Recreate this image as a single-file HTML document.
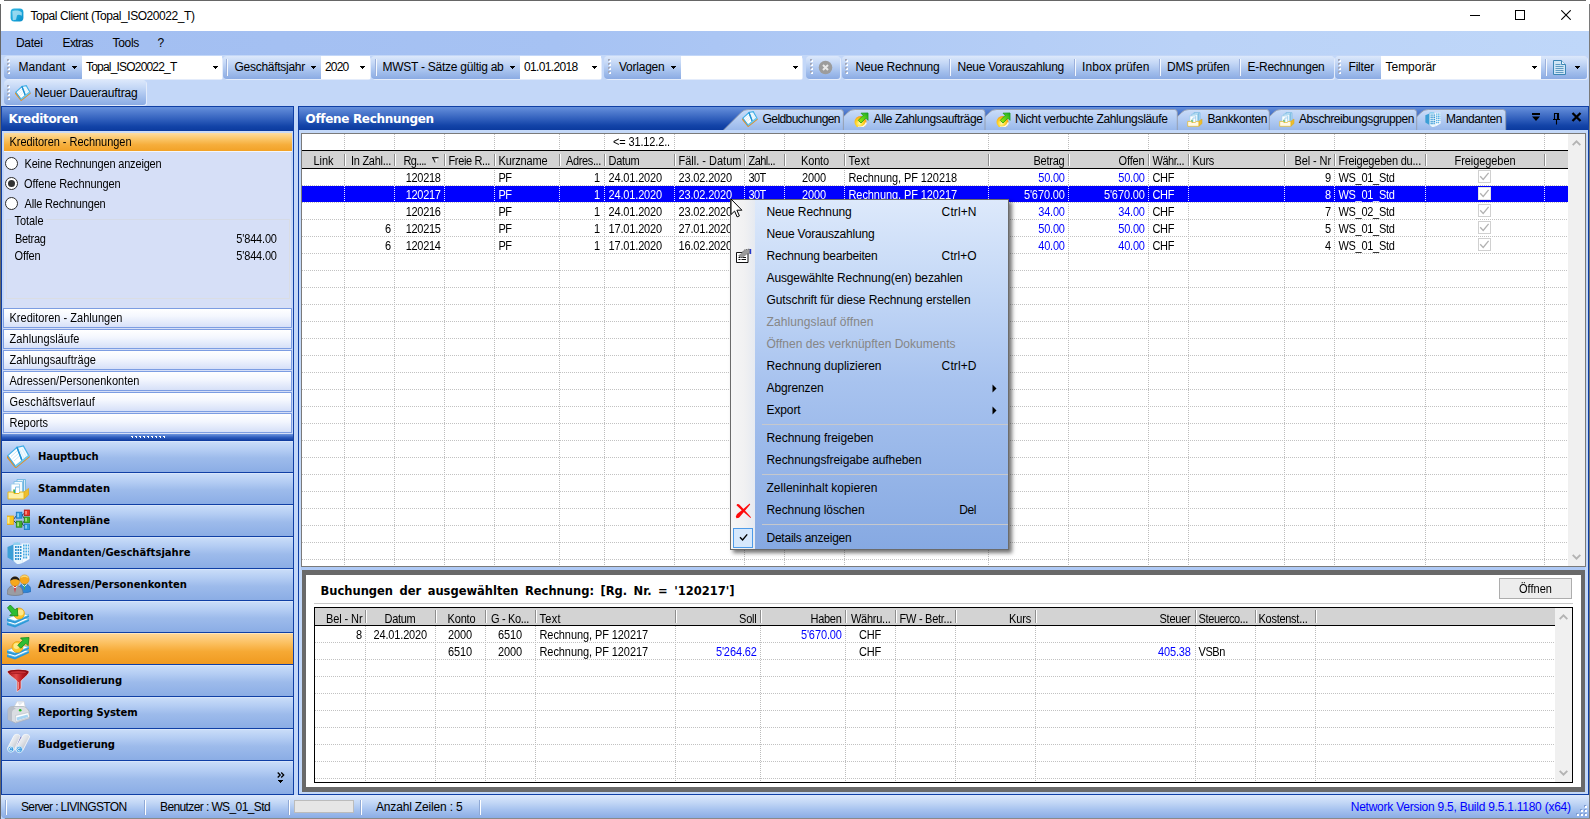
<!DOCTYPE html>
<html lang="de"><head><meta charset="utf-8"><title>Topal Client (Topal_ISO20022_T)</title>
<style>
html,body{margin:0;padding:0;}
body{width:1590px;height:819px;overflow:hidden;position:relative;background:#C3D7F8;font-family:"Liberation Sans",sans-serif;font-size:12px;}
div,span,i,b,svg{position:absolute;display:block;box-sizing:border-box;}
span{white-space:pre;}
</style></head><body>
<div style="left:0px;top:0px;width:1590px;height:819px;background:#C3D7F8"></div>
<div style="left:0px;top:0px;width:1590px;height:31px;background:#fff"></div>
<div style="left:4px;top:0px;width:1582px;height:1px;background:#666"></div>
<div style="left:0px;top:4px;width:1px;height:815px;background:#666"></div>
<div style="left:1589px;top:4px;width:1px;height:815px;background:#7A7A7A"></div>
<svg style="left:10px;top:7.500px" width="14" height="14" viewBox="0 0 14 14"><defs><linearGradient id="ti" x1="0" y1="0" x2="1" y2="1"><stop offset="0" stop-color="#35B6E2"/><stop offset=".6" stop-color="#16A2D8"/><stop offset="1" stop-color="#0B8CC6"/></linearGradient><filter id="tb" x="-20%" y="-20%" width="140%" height="140%"><feGaussianBlur stdDeviation=".55"/></filter></defs><rect x=".6" y=".6" width="12.800" height="12.800" rx="3.600" fill="url(#ti)"/><path d="M2.300 3.300c1-1.200 8-1.600 9.500 1.200v3.300c-2.500-1.500-4.300-1-4.800-.3l-1 4.300-3.200 .5z" fill="#D2F1FB" opacity=".65" filter="url(#tb)"/></svg>
<span style='left:30.50px;top:7.50px;line-height:16px;font-family:"Liberation Sans", sans-serif;font-size:12px;color:#000;letter-spacing:-0.433px;'>Topal Client (Topal_ISO20022_T)</span>
<div style="left:1470px;top:15px;width:10px;height:1px;background:#000"></div>
<div style="left:1515px;top:10px;width:10px;height:10px;border:1px solid #000;box-sizing:border-box"></div>
<svg style="left:1561px;top:10px" width="10" height="10" viewBox="0 0 10 10"><path d="M.3 .3L9.700 9.700M9.700 .3L.3 9.700" stroke="#000" stroke-width="1.100" fill="none"/></svg>
<div style="left:1px;top:31px;width:1588px;height:24px;background:linear-gradient(to right,#A2BEF1 0%,#A6C2F3 35%,#BAD2F7 75%,#BFD7F9 100%)"></div>
<span style='left:16.00px;top:34.50px;line-height:16px;font-family:"Liberation Sans", sans-serif;font-size:12px;color:#000;letter-spacing:-0.303px;'>Datei</span>
<span style='left:62.50px;top:34.50px;line-height:16px;font-family:"Liberation Sans", sans-serif;font-size:12px;color:#000;letter-spacing:-0.586px;'>Extras</span>
<span style='left:112.50px;top:34.50px;line-height:16px;font-family:"Liberation Sans", sans-serif;font-size:12px;color:#000;letter-spacing:-0.303px;'>Tools</span>
<span style='left:157.50px;top:34.50px;line-height:16px;font-family:"Liberation Sans", sans-serif;font-size:12px;color:#000;'>?</span>
<div style="left:4px;top:56px;width:218px;height:23px;background:linear-gradient(to bottom,#DCE8FB 0%,#C5D8F6 30%,#A2BEEC 70%,#8BABE3 100%);border-radius:4px 3px 3px 4px;box-shadow:1px 1px 0 #E4ECFB"></div>
<div style="left:7px;top:59px;width:4px;height:18px"><b style="left:0;top:0px;width:2px;height:2px;background:#A5A8B8"></b><b style="left:1px;top:1px;width:2px;height:2px;background:#fff"></b><b style="left:1px;top:1px;width:1px;height:1px;background:#B9CDED"></b><b style="left:0;top:4px;width:2px;height:2px;background:#A5A8B8"></b><b style="left:1px;top:5px;width:2px;height:2px;background:#fff"></b><b style="left:1px;top:5px;width:1px;height:1px;background:#B9CDED"></b><b style="left:0;top:8px;width:2px;height:2px;background:#A5A8B8"></b><b style="left:1px;top:9px;width:2px;height:2px;background:#fff"></b><b style="left:1px;top:9px;width:1px;height:1px;background:#B9CDED"></b><b style="left:0;top:12px;width:2px;height:2px;background:#A5A8B8"></b><b style="left:1px;top:13px;width:2px;height:2px;background:#fff"></b><b style="left:1px;top:13px;width:1px;height:1px;background:#B9CDED"></b></div>
<span style='left:18.50px;top:58.50px;line-height:16px;font-family:"Liberation Sans", sans-serif;font-size:12px;color:#000;letter-spacing:0.042px;'>Mandant</span>
<i style="left:72px;top:66px;width:5px;height:3px"><b style="left:0px;top:0px;width:5px;height:1px;background:#000"></b><b style="left:1px;top:1px;width:3px;height:1px;background:#000"></b><b style="left:2px;top:2px;width:1px;height:1px;background:#000"></b></i>
<div style="left:82px;top:56px;width:140px;height:23px;background:#fff"></div>
<i style="left:213px;top:66px;width:5px;height:3px"><b style="left:0px;top:0px;width:5px;height:1px;background:#000"></b><b style="left:1px;top:1px;width:3px;height:1px;background:#000"></b><b style="left:2px;top:2px;width:1px;height:1px;background:#000"></b></i>
<span style='left:86.00px;top:59.00px;line-height:16px;font-family:"Liberation Sans", sans-serif;font-size:12px;color:#000;letter-spacing:-0.807px;'>Topal_ISO20022_T</span>
<div style="left:223px;top:56px;width:147px;height:23px;background:linear-gradient(to bottom,#DCE8FB 0%,#C5D8F6 30%,#A2BEEC 70%,#8BABE3 100%);border-radius:4px 3px 3px 4px;box-shadow:1px 1px 0 #E4ECFB"></div>
<div style="left:226px;top:59px;width:1px;height:17px;background:#9BB0DC"></div>
<div style="left:227px;top:59px;width:1px;height:17px;background:#F4F8FE"></div>
<span style='left:234.50px;top:58.50px;line-height:16px;font-family:"Liberation Sans", sans-serif;font-size:12px;color:#000;letter-spacing:-0.273px;'>Geschäftsjahr</span>
<i style="left:311px;top:66px;width:5px;height:3px"><b style="left:0px;top:0px;width:5px;height:1px;background:#000"></b><b style="left:1px;top:1px;width:3px;height:1px;background:#000"></b><b style="left:2px;top:2px;width:1px;height:1px;background:#000"></b></i>
<div style="left:321px;top:56px;width:48.5px;height:23px;background:#fff"></div>
<i style="left:360px;top:66px;width:5px;height:3px"><b style="left:0px;top:0px;width:5px;height:1px;background:#000"></b><b style="left:1px;top:1px;width:3px;height:1px;background:#000"></b><b style="left:2px;top:2px;width:1px;height:1px;background:#000"></b></i>
<span style='left:325.00px;top:59.00px;line-height:16px;font-family:"Liberation Sans", sans-serif;font-size:12px;color:#000;letter-spacing:-0.801px;'>2020</span>
<div style="left:371px;top:56px;width:230px;height:23px;background:linear-gradient(to bottom,#DCE8FB 0%,#C5D8F6 30%,#A2BEEC 70%,#8BABE3 100%);border-radius:4px 3px 3px 4px;box-shadow:1px 1px 0 #E4ECFB"></div>
<div style="left:375px;top:59px;width:1px;height:17px;background:#9BB0DC"></div>
<div style="left:376px;top:59px;width:1px;height:17px;background:#F4F8FE"></div>
<span style='left:382.50px;top:58.50px;line-height:16px;font-family:"Liberation Sans", sans-serif;font-size:12px;color:#000;letter-spacing:-0.250px;'>MWST - Sätze gültig ab</span>
<i style="left:510px;top:66px;width:5px;height:3px"><b style="left:0px;top:0px;width:5px;height:1px;background:#000"></b><b style="left:1px;top:1px;width:3px;height:1px;background:#000"></b><b style="left:2px;top:2px;width:1px;height:1px;background:#000"></b></i>
<div style="left:520px;top:56px;width:81px;height:23px;background:#fff"></div>
<i style="left:592px;top:66px;width:5px;height:3px"><b style="left:0px;top:0px;width:5px;height:1px;background:#000"></b><b style="left:1px;top:1px;width:3px;height:1px;background:#000"></b><b style="left:2px;top:2px;width:1px;height:1px;background:#000"></b></i>
<span style='left:524.00px;top:59.00px;line-height:16px;font-family:"Liberation Sans", sans-serif;font-size:12px;color:#000;letter-spacing:-0.656px;'>01.01.2018</span>
<div style="left:604px;top:56px;width:198px;height:23px;background:linear-gradient(to bottom,#DCE8FB 0%,#C5D8F6 30%,#A2BEEC 70%,#8BABE3 100%);border-radius:4px 3px 3px 4px;box-shadow:1px 1px 0 #E4ECFB"></div>
<div style="left:608px;top:59px;width:4px;height:18px"><b style="left:0;top:0px;width:2px;height:2px;background:#A5A8B8"></b><b style="left:1px;top:1px;width:2px;height:2px;background:#fff"></b><b style="left:1px;top:1px;width:1px;height:1px;background:#B9CDED"></b><b style="left:0;top:4px;width:2px;height:2px;background:#A5A8B8"></b><b style="left:1px;top:5px;width:2px;height:2px;background:#fff"></b><b style="left:1px;top:5px;width:1px;height:1px;background:#B9CDED"></b><b style="left:0;top:8px;width:2px;height:2px;background:#A5A8B8"></b><b style="left:1px;top:9px;width:2px;height:2px;background:#fff"></b><b style="left:1px;top:9px;width:1px;height:1px;background:#B9CDED"></b><b style="left:0;top:12px;width:2px;height:2px;background:#A5A8B8"></b><b style="left:1px;top:13px;width:2px;height:2px;background:#fff"></b><b style="left:1px;top:13px;width:1px;height:1px;background:#B9CDED"></b></div>
<span style='left:619.00px;top:58.50px;line-height:16px;font-family:"Liberation Sans", sans-serif;font-size:12px;color:#000;letter-spacing:-0.234px;'>Vorlagen</span>
<i style="left:671px;top:66px;width:5px;height:3px"><b style="left:0px;top:0px;width:5px;height:1px;background:#000"></b><b style="left:1px;top:1px;width:3px;height:1px;background:#000"></b><b style="left:2px;top:2px;width:1px;height:1px;background:#000"></b></i>
<div style="left:681px;top:56px;width:121px;height:23px;background:#fff"></div>
<i style="left:793px;top:66px;width:5px;height:3px"><b style="left:0px;top:0px;width:5px;height:1px;background:#000"></b><b style="left:1px;top:1px;width:3px;height:1px;background:#000"></b><b style="left:2px;top:2px;width:1px;height:1px;background:#000"></b></i>
<div style="left:806px;top:56px;width:34px;height:23px;background:linear-gradient(to bottom,#DCE8FB 0%,#C5D8F6 30%,#A2BEEC 70%,#8BABE3 100%);border-radius:4px 3px 3px 4px;box-shadow:1px 1px 0 #E4ECFB"></div>
<div style="left:810px;top:59px;width:4px;height:18px"><b style="left:0;top:0px;width:2px;height:2px;background:#A5A8B8"></b><b style="left:1px;top:1px;width:2px;height:2px;background:#fff"></b><b style="left:1px;top:1px;width:1px;height:1px;background:#B9CDED"></b><b style="left:0;top:4px;width:2px;height:2px;background:#A5A8B8"></b><b style="left:1px;top:5px;width:2px;height:2px;background:#fff"></b><b style="left:1px;top:5px;width:1px;height:1px;background:#B9CDED"></b><b style="left:0;top:8px;width:2px;height:2px;background:#A5A8B8"></b><b style="left:1px;top:9px;width:2px;height:2px;background:#fff"></b><b style="left:1px;top:9px;width:1px;height:1px;background:#B9CDED"></b><b style="left:0;top:12px;width:2px;height:2px;background:#A5A8B8"></b><b style="left:1px;top:13px;width:2px;height:2px;background:#fff"></b><b style="left:1px;top:13px;width:1px;height:1px;background:#B9CDED"></b></div>
<svg style="left:818px;top:60px" width="15" height="15" viewBox="0 0 15 15"><circle cx="7.5" cy="7.5" r="6.8" fill="#9C9C9C"/><path d="M5 5l5 5M10 5l-5 5" stroke="#E8E8E8" stroke-width="2" fill="none"/></svg>
<div style="left:841.5px;top:56px;width:492px;height:23px;background:linear-gradient(to bottom,#DCE8FB 0%,#C5D8F6 30%,#A2BEEC 70%,#8BABE3 100%);border-radius:4px 3px 3px 4px;box-shadow:1px 1px 0 #E4ECFB"></div>
<div style="left:845px;top:59px;width:4px;height:18px"><b style="left:0;top:0px;width:2px;height:2px;background:#A5A8B8"></b><b style="left:1px;top:1px;width:2px;height:2px;background:#fff"></b><b style="left:1px;top:1px;width:1px;height:1px;background:#B9CDED"></b><b style="left:0;top:4px;width:2px;height:2px;background:#A5A8B8"></b><b style="left:1px;top:5px;width:2px;height:2px;background:#fff"></b><b style="left:1px;top:5px;width:1px;height:1px;background:#B9CDED"></b><b style="left:0;top:8px;width:2px;height:2px;background:#A5A8B8"></b><b style="left:1px;top:9px;width:2px;height:2px;background:#fff"></b><b style="left:1px;top:9px;width:1px;height:1px;background:#B9CDED"></b><b style="left:0;top:12px;width:2px;height:2px;background:#A5A8B8"></b><b style="left:1px;top:13px;width:2px;height:2px;background:#fff"></b><b style="left:1px;top:13px;width:1px;height:1px;background:#B9CDED"></b></div>
<span style='left:855.50px;top:58.50px;line-height:16px;font-family:"Liberation Sans", sans-serif;font-size:12px;color:#000;letter-spacing:-0.210px;'>Neue Rechnung</span>
<div style="left:949px;top:59px;width:1px;height:17px;background:#9BB0DC"></div>
<div style="left:950px;top:59px;width:1px;height:17px;background:#F4F8FE"></div>
<span style='left:957.50px;top:58.50px;line-height:16px;font-family:"Liberation Sans", sans-serif;font-size:12px;color:#000;letter-spacing:-0.273px;'>Neue Vorauszahlung</span>
<div style="left:1074px;top:59px;width:1px;height:17px;background:#9BB0DC"></div>
<div style="left:1075px;top:59px;width:1px;height:17px;background:#F4F8FE"></div>
<span style='left:1082.00px;top:58.50px;line-height:16px;font-family:"Liberation Sans", sans-serif;font-size:12px;color:#000;letter-spacing:0.065px;'>Inbox prüfen</span>
<div style="left:1159px;top:59px;width:1px;height:17px;background:#9BB0DC"></div>
<div style="left:1160px;top:59px;width:1px;height:17px;background:#F4F8FE"></div>
<span style='left:1167.00px;top:58.50px;line-height:16px;font-family:"Liberation Sans", sans-serif;font-size:12px;color:#000;letter-spacing:-0.153px;'>DMS prüfen</span>
<div style="left:1239px;top:59px;width:1px;height:17px;background:#9BB0DC"></div>
<div style="left:1240px;top:59px;width:1px;height:17px;background:#F4F8FE"></div>
<span style='left:1247.50px;top:58.50px;line-height:16px;font-family:"Liberation Sans", sans-serif;font-size:12px;color:#000;letter-spacing:-0.255px;'>E-Rechnungen</span>
<div style="left:1334.5px;top:56px;width:252px;height:23px;background:linear-gradient(to bottom,#DCE8FB 0%,#C5D8F6 30%,#A2BEEC 70%,#8BABE3 100%);border-radius:4px 3px 3px 4px;box-shadow:1px 1px 0 #E4ECFB"></div>
<div style="left:1338px;top:59px;width:4px;height:18px"><b style="left:0;top:0px;width:2px;height:2px;background:#A5A8B8"></b><b style="left:1px;top:1px;width:2px;height:2px;background:#fff"></b><b style="left:1px;top:1px;width:1px;height:1px;background:#B9CDED"></b><b style="left:0;top:4px;width:2px;height:2px;background:#A5A8B8"></b><b style="left:1px;top:5px;width:2px;height:2px;background:#fff"></b><b style="left:1px;top:5px;width:1px;height:1px;background:#B9CDED"></b><b style="left:0;top:8px;width:2px;height:2px;background:#A5A8B8"></b><b style="left:1px;top:9px;width:2px;height:2px;background:#fff"></b><b style="left:1px;top:9px;width:1px;height:1px;background:#B9CDED"></b><b style="left:0;top:12px;width:2px;height:2px;background:#A5A8B8"></b><b style="left:1px;top:13px;width:2px;height:2px;background:#fff"></b><b style="left:1px;top:13px;width:1px;height:1px;background:#B9CDED"></b></div>
<span style='left:1348.50px;top:58.50px;line-height:16px;font-family:"Liberation Sans", sans-serif;font-size:12px;color:#000;letter-spacing:-0.195px;'>Filter</span>
<div style="left:1381px;top:56px;width:160px;height:23px;background:#fff"></div>
<i style="left:1532px;top:66px;width:5px;height:3px"><b style="left:0px;top:0px;width:5px;height:1px;background:#000"></b><b style="left:1px;top:1px;width:3px;height:1px;background:#000"></b><b style="left:2px;top:2px;width:1px;height:1px;background:#000"></b></i>
<span style='left:1385.50px;top:59.00px;line-height:16px;font-family:"Liberation Sans", sans-serif;font-size:12px;color:#000;letter-spacing:-0.023px;'>Temporär</span>
<div style="left:1545px;top:59px;width:1px;height:17px;background:#9BB0DC"></div>
<div style="left:1546px;top:59px;width:1px;height:17px;background:#F4F8FE"></div>
<svg style="left:1552px;top:59px" width="15" height="17" viewBox="0 0 15 17"><path d="M1.5 1.5h8l4 4v10h-12z" fill="#CFE6F5" stroke="#3C86B5" stroke-width="1"/><path d="M9.5 1.5v4h4" fill="#EAF5FB" stroke="#3C86B5" stroke-width="1"/><path d="M3.5 5.5h5M3.5 7.5h8M3.5 9.5h8M3.5 11.5h8M3.5 13.5h8" stroke="#5F9BC2" stroke-width="1"/></svg>
<i style="left:1575px;top:66px;width:5px;height:3px"><b style="left:0px;top:0px;width:5px;height:1px;background:#000"></b><b style="left:1px;top:1px;width:3px;height:1px;background:#000"></b><b style="left:2px;top:2px;width:1px;height:1px;background:#000"></b></i>
<div style="left:4px;top:80px;width:142px;height:25px;background:linear-gradient(to bottom,#DCE8FB 0%,#C5D8F6 30%,#A2BEEC 70%,#8BABE3 100%);border-radius:4px 3px 3px 4px;box-shadow:1px 1px 0 #E4ECFB"></div>
<div style="left:7px;top:85px;width:4px;height:18px"><b style="left:0;top:0px;width:2px;height:2px;background:#A5A8B8"></b><b style="left:1px;top:1px;width:2px;height:2px;background:#fff"></b><b style="left:1px;top:1px;width:1px;height:1px;background:#B9CDED"></b><b style="left:0;top:4px;width:2px;height:2px;background:#A5A8B8"></b><b style="left:1px;top:5px;width:2px;height:2px;background:#fff"></b><b style="left:1px;top:5px;width:1px;height:1px;background:#B9CDED"></b><b style="left:0;top:8px;width:2px;height:2px;background:#A5A8B8"></b><b style="left:1px;top:9px;width:2px;height:2px;background:#fff"></b><b style="left:1px;top:9px;width:1px;height:1px;background:#B9CDED"></b><b style="left:0;top:12px;width:2px;height:2px;background:#A5A8B8"></b><b style="left:1px;top:13px;width:2px;height:2px;background:#fff"></b><b style="left:1px;top:13px;width:1px;height:1px;background:#B9CDED"></b></div>
<svg style="left:14.5px;top:84.5px" width="16" height="16" viewBox="0 0 23 24"><path d="M-.8 12.800L8.600 24.300 23.300 12.600 21.800 10 8.600 20 1 10z" fill="#E88F22"/><path d="M.8 10.600L10 2.300 15.200 16 8.600 21.300z" fill="#FFFFFF" stroke="#3FAEE6" stroke-width="1.700"/><path d="M10 2.300L16.400 .9 21.800 10.600 15.200 16z" fill="#F2FAFE" stroke="#3FAEE6" stroke-width="1.700"/><path d="M4 11.500l6.500-5.800M5.500 13.800l6.500-5.800M7 16l6.500-5.800" stroke="#CBE8F8" stroke-width="1"/><path d="M12.500 4.500l4.500 8.500M15 3.500l4.500 8.500" stroke="#D6EEFA" stroke-width="1"/><path d="M10 2.300L15.200 16" stroke="#2191D4" stroke-width="2"/><path d="M8.600 21.300L21.800 10.600" stroke="#6CC6EE" stroke-width="2.400"/></svg>
<span style='left:34.50px;top:84.50px;line-height:16px;font-family:"Liberation Sans", sans-serif;font-size:12px;color:#000;letter-spacing:-0.170px;'>Neuer Dauerauftrag</span>
<div style="left:1px;top:106px;width:293px;height:689px;background:#0F3FA5"></div>
<div style="left:2px;top:107px;width:291px;height:24px;background:linear-gradient(to bottom,#6690DC 0%,#4C78CC 25%,#2D5CBA 55%,#1344A8 80%,#0B3A9E 100%)"></div>
<span style='left:8.50px;top:111.00px;line-height:16px;font-family:"DejaVu Sans", "Liberation Sans", sans-serif;font-size:12px;color:#fff;font-weight:bold;letter-spacing:-0.314px;'>Kreditoren</span>
<div style="left:2px;top:131px;width:291px;height:303px;background:#D6DFF7;border-left:2px solid #C3D6F7;border-right:2px solid #C3D6F7"></div>
<div style="left:2px;top:131px;width:291px;height:2px;background:#C9DAF8"></div>
<div style="left:4px;top:133px;width:288px;height:18px;background:linear-gradient(to bottom,#FDDDA0 0%,#FAC465 35%,#F6AE3C 65%,#F2A227 100%)"></div>
<div style="left:4px;top:151px;width:288px;height:1px;background:#F3F6FD"></div>
<span style='left:9.50px;top:135.00px;line-height:15px;font-family:"Liberation Sans", sans-serif;font-size:11px;color:#000;letter-spacing:-0.040px;transform:scaleY(1.08);'>Kreditoren - Rechnungen</span>
<div style="left:5px;top:157px;width:13px;height:13px;border-radius:50%;background:#fff;border:1px solid #2B2B2B"></div>
<span style='left:24.50px;top:157.00px;line-height:15px;font-family:"Liberation Sans", sans-serif;font-size:11px;color:#000;letter-spacing:-0.171px;transform:scaleY(1.08);'>Keine Rechnungen anzeigen</span>
<div style="left:5px;top:177px;width:13px;height:13px;border-radius:50%;background:#fff;border:1px solid #2B2B2B"></div>
<div style="left:8px;top:180px;width:7px;height:7px;border-radius:50%;background:#333"></div>
<span style='left:24.00px;top:177.00px;line-height:15px;font-family:"Liberation Sans", sans-serif;font-size:11px;color:#000;letter-spacing:-0.104px;transform:scaleY(1.08);'>Offene Rechnungen</span>
<div style="left:5px;top:197px;width:13px;height:13px;border-radius:50%;background:#fff;border:1px solid #2B2B2B"></div>
<span style='left:24.50px;top:197.00px;line-height:15px;font-family:"Liberation Sans", sans-serif;font-size:11px;color:#000;letter-spacing:-0.186px;transform:scaleY(1.08);'>Alle Rechnungen</span>
<div style="left:6px;top:219px;width:284px;height:80px;border:1px solid #DADDE4;border-top-color:#D5DAE6"></div>
<div style="left:12px;top:214px;width:34px;height:14px;background:#D6DFF7"></div>
<span style='left:14.50px;top:213.50px;line-height:15px;font-family:"Liberation Sans", sans-serif;font-size:11px;color:#000;letter-spacing:-0.060px;transform:scaleY(1.08);'>Totale</span>
<span style='left:15.00px;top:231.50px;line-height:15px;font-family:"Liberation Sans", sans-serif;font-size:11px;color:#000;letter-spacing:-0.320px;transform:scaleY(1.08);'>Betrag</span>
<span style='left:14.50px;top:248.50px;line-height:15px;font-family:"Liberation Sans", sans-serif;font-size:11px;color:#000;letter-spacing:-0.144px;transform:scaleY(1.08);'>Offen</span>
<span style='left:236.33px;top:231.50px;line-height:15px;font-family:"Liberation Sans", sans-serif;font-size:11px;color:#000;letter-spacing:-0.172px;transform:scaleY(1.08);'>5'844.00</span>
<span style='left:236.33px;top:248.50px;line-height:15px;font-family:"Liberation Sans", sans-serif;font-size:11px;color:#000;letter-spacing:-0.172px;transform:scaleY(1.08);'>5'844.00</span>
<div style="left:3px;top:308px;width:289px;height:20px;background:linear-gradient(to bottom,#FFFFFF 0%,#F4F7FE 40%,#D6E0F8 100%);border:1px solid #7C9DE2"></div>
<span style='left:9.50px;top:311.00px;line-height:15px;font-family:"Liberation Sans", sans-serif;font-size:11px;color:#000;letter-spacing:0.022px;transform:scaleY(1.08);'>Kreditoren - Zahlungen</span>
<div style="left:3px;top:329px;width:289px;height:20px;background:linear-gradient(to bottom,#FFFFFF 0%,#F4F7FE 40%,#D6E0F8 100%);border:1px solid #7C9DE2"></div>
<span style='left:9.50px;top:332.00px;line-height:15px;font-family:"Liberation Sans", sans-serif;font-size:11px;color:#000;letter-spacing:0.069px;transform:scaleY(1.08);'>Zahlungsläufe</span>
<div style="left:3px;top:350px;width:289px;height:20px;background:linear-gradient(to bottom,#FFFFFF 0%,#F4F7FE 40%,#D6E0F8 100%);border:1px solid #7C9DE2"></div>
<span style='left:9.50px;top:353.00px;line-height:15px;font-family:"Liberation Sans", sans-serif;font-size:11px;color:#000;letter-spacing:0.055px;transform:scaleY(1.08);'>Zahlungsaufträge</span>
<div style="left:3px;top:371px;width:289px;height:20px;background:linear-gradient(to bottom,#FFFFFF 0%,#F4F7FE 40%,#D6E0F8 100%);border:1px solid #7C9DE2"></div>
<span style='left:9.50px;top:374.00px;line-height:15px;font-family:"Liberation Sans", sans-serif;font-size:11px;color:#000;letter-spacing:0.015px;transform:scaleY(1.08);'>Adressen/Personenkonten</span>
<div style="left:3px;top:392px;width:289px;height:20px;background:linear-gradient(to bottom,#FFFFFF 0%,#F4F7FE 40%,#D6E0F8 100%);border:1px solid #7C9DE2"></div>
<span style='left:9.50px;top:395.00px;line-height:15px;font-family:"Liberation Sans", sans-serif;font-size:11px;color:#000;letter-spacing:0.185px;transform:scaleY(1.08);'>Geschäftsverlauf</span>
<div style="left:3px;top:413px;width:289px;height:20px;background:linear-gradient(to bottom,#FFFFFF 0%,#F4F7FE 40%,#D6E0F8 100%);border:1px solid #7C9DE2"></div>
<span style='left:9.50px;top:416.00px;line-height:15px;font-family:"Liberation Sans", sans-serif;font-size:11px;color:#000;transform:scaleY(1.08);'>Reports</span>
<div style="left:2px;top:434px;width:291px;height:7px;background:linear-gradient(to bottom,#6D95DE 0%,#2C5BBD 50%,#0B379B 100%)"></div>
<div style="left:131px;top:436px;width:36px;height:3px"><b style="left:0px;top:0;width:2px;height:2px;background:#fff"></b><b style="left:0px;top:1px;width:1px;height:1px;background:#1D4CB0"></b><b style="left:4px;top:0;width:2px;height:2px;background:#fff"></b><b style="left:4px;top:1px;width:1px;height:1px;background:#1D4CB0"></b><b style="left:8px;top:0;width:2px;height:2px;background:#fff"></b><b style="left:8px;top:1px;width:1px;height:1px;background:#1D4CB0"></b><b style="left:12px;top:0;width:2px;height:2px;background:#fff"></b><b style="left:12px;top:1px;width:1px;height:1px;background:#1D4CB0"></b><b style="left:16px;top:0;width:2px;height:2px;background:#fff"></b><b style="left:16px;top:1px;width:1px;height:1px;background:#1D4CB0"></b><b style="left:20px;top:0;width:2px;height:2px;background:#fff"></b><b style="left:20px;top:1px;width:1px;height:1px;background:#1D4CB0"></b><b style="left:24px;top:0;width:2px;height:2px;background:#fff"></b><b style="left:24px;top:1px;width:1px;height:1px;background:#1D4CB0"></b><b style="left:28px;top:0;width:2px;height:2px;background:#fff"></b><b style="left:28px;top:1px;width:1px;height:1px;background:#1D4CB0"></b><b style="left:32px;top:0;width:2px;height:2px;background:#fff"></b><b style="left:32px;top:1px;width:1px;height:1px;background:#1D4CB0"></b></div>
<div style="left:2px;top:441px;width:291px;height:31px;background:linear-gradient(to bottom,#CBDEF9 0%,#B3CCF3 30%,#9DBBEB 55%,#8BADE5 100%)"></div>
<div style="left:2px;top:441px;width:291px;height:1px;background:#D7E5FA"></div>
<svg style="left:7px;top:445px" width="23" height="23" viewBox="0 0 23 23"><path d="M-.5 12.300L8.600 23.600 23 12 21.800 10 8.600 20 1 10z" fill="#E88F22"/><path d="M.8 10.600L10 2.300 15.200 16 8.600 21.300z" fill="#FFFFFF" stroke="#3FAEE6" stroke-width="1.200"/><path d="M10 2.300L16.400 .9 21.800 10.600 15.200 16z" fill="#F2FAFE" stroke="#3FAEE6" stroke-width="1.200"/><path d="M4 11.500l6.500-5.800M5.500 13.800l6.500-5.800M7 16l6.500-5.800" stroke="#CBE8F8" stroke-width="1"/><path d="M12.500 4.500l4.500 8.500M15 3.500l4.500 8.500" stroke="#D6EEFA" stroke-width="1"/><path d="M10 2.300L15.200 16" stroke="#2191D4" stroke-width="1.500"/><path d="M8.600 21.300L21.800 10.600" stroke="#6CC6EE" stroke-width="1.800"/></svg>
<span style='left:38.00px;top:449.70px;line-height:14px;font-family:"DejaVu Sans", "Liberation Sans", sans-serif;font-size:10px;color:#000;font-weight:bold;letter-spacing:-0.111px;'>Hauptbuch</span>
<div style="left:2px;top:473px;width:291px;height:31px;background:linear-gradient(to bottom,#CBDEF9 0%,#B3CCF3 30%,#9DBBEB 55%,#8BADE5 100%)"></div>
<div style="left:2px;top:473px;width:291px;height:1px;background:#D7E5FA"></div>
<svg style="left:7px;top:477px" width="23" height="23" viewBox="0 0 23 23"><path d="M10 2.500h8.500v12h-8.500z" fill="#DFF0FA" stroke="#6DB4DF" stroke-width=".9"/><path d="M16.500 3v11" stroke="#6DB4DF" stroke-width="1.200"/><path d="M7 4.500h8.500v12h-8.500z" fill="#F2FAFE" stroke="#7FC0E6" stroke-width=".9"/><path d="M4 7h8.500v11h-8.500z" fill="#FFFFFF" stroke="#9CCDEA" stroke-width=".9"/><path d="M8.500 10v6.500M8.500 10h4" stroke="#7FC0E6" stroke-width="1"/><path d="M6.300 12.500h1.600v5h-1.600z" fill="#2FA838"/><path d="M17 15l4.500-3.500v6.500l-4.500 4z" fill="#EDBE2C" stroke="#E0A91A" stroke-width=".8"/><path d="M1 15h5l1 1.500h5l1-1.500h4v7h-16z" fill="#FDF0A8" stroke="#E8B820" stroke-width="1"/></svg>
<span style='left:38.00px;top:481.70px;line-height:14px;font-family:"DejaVu Sans", "Liberation Sans", sans-serif;font-size:10px;color:#000;font-weight:bold;letter-spacing:-0.017px;'>Stammdaten</span>
<div style="left:2px;top:505px;width:291px;height:31px;background:linear-gradient(to bottom,#CBDEF9 0%,#B3CCF3 30%,#9DBBEB 55%,#8BADE5 100%)"></div>
<div style="left:2px;top:505px;width:291px;height:1px;background:#D7E5FA"></div>
<svg style="left:7px;top:509px" width="23" height="23" viewBox="0 0 23 23"><path d="M6 11l4-5M6 11l4 4M15 6l3-2M15 6l3 4.500M15 15l3-4M15 15l3 2.500" stroke="#26324A" stroke-width=".9" fill="none"/><rect x="-.5" y="7" width="7" height="8.500" fill="#F7C81E" stroke="#E5A512" stroke-width=".8"/><path d="M.5 8h2v6.500h-2z" fill="#FDE98A"/><rect x="9.300" y="3.200" width="5.600" height="6" fill="#2D9BE0" stroke="#1878C2" stroke-width=".8"/><path d="M10.300 4.200h1.600v4h-1.600z" fill="#9FD6F6"/><rect x="9.300" y="12.200" width="5.600" height="6" fill="#43B02A" stroke="#2A8A18" stroke-width=".8"/><path d="M10.300 13.200h1.600v4h-1.600z" fill="#B2E58E"/><rect x="17.300" y="1" width="5.200" height="5.600" fill="#E8342A" stroke="#B81C14" stroke-width=".8"/><path d="M18.300 2h1.500v3.500h-1.500z" fill="#F8A49C"/><rect x="17.300" y="8" width="5.200" height="5.600" fill="#43B02A" stroke="#2A8A18" stroke-width=".8"/><path d="M18.300 9h1.500v3.500h-1.500z" fill="#B2E58E"/><rect x="17.300" y="15" width="5.200" height="5.600" fill="#2D9BE0" stroke="#1878C2" stroke-width=".8"/><path d="M18.300 16h1.500v3.500h-1.500z" fill="#9FD6F6"/></svg>
<span style='left:38.00px;top:513.70px;line-height:14px;font-family:"DejaVu Sans", "Liberation Sans", sans-serif;font-size:10px;color:#000;font-weight:bold;letter-spacing:0.047px;'>Kontenpläne</span>
<div style="left:2px;top:537px;width:291px;height:31px;background:linear-gradient(to bottom,#CBDEF9 0%,#B3CCF3 30%,#9DBBEB 55%,#8BADE5 100%)"></div>
<div style="left:2px;top:537px;width:291px;height:1px;background:#D7E5FA"></div>
<svg style="left:7px;top:541px" width="23" height="23" viewBox="0 0 23 23"><path d="M.5 6l6-2.500v16.500l-6-3.500z" fill="#3C9FD6"/><path d="M6.500 3.500l4-2v21.500l-4-3z" fill="#2E8DC6"/><path d="M6.500 1.500h6.500v3h-6.500z" fill="#8FD0F0"/><path d="M6.500 4h9v18l-5 1.500-4-3.500z" fill="#EAF6FD"/><path d="M14.500 2.500h8v15.500l-7 4z" fill="#F6FBFE"/><path d="M8 6h6.500M8 9h6.500M8 12h6.500M8 15h6.500M8 18h6" stroke="#2F93D2" stroke-width="2" stroke-dasharray="1.700 .8"/><path d="M16 4.500h6M16 7.500h6M16 10.500h6M16 13.500h6M16 16.500h5" stroke="#49A9E2" stroke-width="2" stroke-dasharray="1.600 .8"/></svg>
<span style='left:38.00px;top:545.70px;line-height:14px;font-family:"DejaVu Sans", "Liberation Sans", sans-serif;font-size:10px;color:#000;font-weight:bold;letter-spacing:0.020px;'>Mandanten/Geschäftsjahre</span>
<div style="left:2px;top:569px;width:291px;height:31px;background:linear-gradient(to bottom,#CBDEF9 0%,#B3CCF3 30%,#9DBBEB 55%,#8BADE5 100%)"></div>
<div style="left:2px;top:569px;width:291px;height:1px;background:#D7E5FA"></div>
<svg style="left:7px;top:573px" width="24" height="23" viewBox="0 0 24 23"><path d="M11 19c0-5.500 2.500-8 6.500-8s6.500 2.500 6.500 7.500c-3 1.500-10 1.500-13 .5z" fill="#2F86D6" stroke="#1A62AE" stroke-width=".6"/><path d="M16.300 11.500l1.200 6 1.200-6z" fill="#3DB54A"/><path d="M15 11.300l2.500 2 2.500-2" fill="none" stroke="#DCEBFA" stroke-width="1"/><circle cx="17.500" cy="6.500" r="4.600" fill="#F6A81C" stroke="#D98A0E" stroke-width=".6"/><path d="M13.200 5.500c.8-4.500 7.800-4.500 8.600 0-2-2-6.600-2-8.600 0z" fill="#F8D873"/><path d="M0 21c0-6 3-8.500 8-8.500s8 2.500 8 8.500c-4 2-12 2-16 0z" fill="#9A9DA3" stroke="#6F7278" stroke-width=".6"/><path d="M6.800 13l1.200 7 1.200-7z" fill="#E0242C"/><path d="M5.500 12.800l2.500 2.200 2.500-2.200" fill="none" stroke="#F2F2F2" stroke-width="1"/><circle cx="8" cy="8.500" r="4.500" fill="#F6A81C" stroke="#D98A0E" stroke-width=".6"/><path d="M3.400 8c0-6 9.200-6 9.200 0-1.500-2.300-7.700-2.300-9.200 0z" fill="#1C1C1C"/></svg>
<span style='left:38.00px;top:577.70px;line-height:14px;font-family:"DejaVu Sans", "Liberation Sans", sans-serif;font-size:10px;color:#000;font-weight:bold;letter-spacing:0.043px;'>Adressen/Personenkonten</span>
<div style="left:2px;top:601px;width:291px;height:31px;background:linear-gradient(to bottom,#CBDEF9 0%,#B3CCF3 30%,#9DBBEB 55%,#8BADE5 100%)"></div>
<div style="left:2px;top:601px;width:291px;height:1px;background:#D7E5FA"></div>
<svg style="left:7px;top:605px" width="23" height="23" viewBox="0 0 23 23"><path d="M0 17.500v2.500l8 2.500 14-6.500v-2.500z" fill="#2C9AD8"/><path d="M0 17.500l13-5.500 9 2-14 6z" fill="#FFFFFF" stroke="#5CB8E8" stroke-width=".7"/><path d="M0 13.500v2.500l8 2.500 14-6.500v-2.500z" fill="#2C9AD8"/><path d="M0 13.500l13-5.500 9 2-14 6z" fill="#FFFFFF" stroke="#5CB8E8" stroke-width=".7"/><circle cx="12" cy="8.500" r="5.500" fill="#FBC92E" stroke="#E39A14" stroke-width=".7"/><circle cx="13.500" cy="7.500" r="3" fill="#FEE98C"/><path d="M.5 2.800l2.800-2.800 5 5 2-2 .5 8-8-.5 2-2z" fill="#2DBE34" stroke="#16861C" stroke-width=".8"/></svg>
<span style='left:38.00px;top:609.70px;line-height:14px;font-family:"DejaVu Sans", "Liberation Sans", sans-serif;font-size:10px;color:#000;font-weight:bold;letter-spacing:-0.073px;'>Debitoren</span>
<div style="left:2px;top:633px;width:291px;height:31px;background:linear-gradient(to bottom,#FFD898 0%,#FBBE5C 35%,#F6A934 60%,#F09A20 100%)"></div>
<div style="left:2px;top:633px;width:291px;height:1px;background:#FFE7BC"></div>
<svg style="left:7px;top:637px" width="23" height="23" viewBox="0 0 23 23"><path d="M0 17.500v2.500l8 2.500 14-6.500v-2.500z" fill="#2C9AD8"/><path d="M0 17.500l13-5.500 9 2-14 6z" fill="#FFFFFF" stroke="#5CB8E8" stroke-width=".7"/><path d="M0 13.500v2.500l8 2.500 14-6.500v-2.500z" fill="#2C9AD8"/><path d="M0 13.500l13-5.500 9 2-14 6z" fill="#FFFFFF" stroke="#5CB8E8" stroke-width=".7"/><circle cx="10.500" cy="10" r="5.500" fill="#FBC92E" stroke="#E39A14" stroke-width=".7"/><circle cx="9.500" cy="9" r="3" fill="#FEE98C"/><path d="M22 .5l-8.500 .5 2.300 2.300-5 5 3 3 5-5 2.300 2.300z" fill="#2DBE34" stroke="#16861C" stroke-width=".8"/></svg>
<span style='left:38.00px;top:641.70px;line-height:14px;font-family:"DejaVu Sans", "Liberation Sans", sans-serif;font-size:10px;color:#000;font-weight:bold;'>Kreditoren</span>
<div style="left:2px;top:665px;width:291px;height:31px;background:linear-gradient(to bottom,#CBDEF9 0%,#B3CCF3 30%,#9DBBEB 55%,#8BADE5 100%)"></div>
<div style="left:2px;top:665px;width:291px;height:1px;background:#D7E5FA"></div>
<svg style="left:7px;top:669px" width="23" height="23" viewBox="0 0 23 23"><defs><linearGradient id="fg" x1="0" y1="0" x2="1" y2="0"><stop offset="0" stop-color="#A01218"/><stop offset=".4" stop-color="#E24A4A"/><stop offset=".7" stop-color="#B8181E"/><stop offset="1" stop-color="#8E0E14"/></linearGradient></defs><path d="M.5 2.800c0-2.800 21.500-2.800 21.500 0 0 2.700-6 6.500-8 9.500v7.200l-4 3.500v-10.700c-2-3-9.500-6.800-9.500-9.500z" fill="url(#fg)" stroke="#F3DADA" stroke-width=".7"/><ellipse cx="11.200" cy="2.800" rx="10.300" ry="2.100" fill="#8E0E14"/><ellipse cx="11.200" cy="3.300" rx="8.200" ry="1.200" fill="#C83034"/><path d="M11.500 13v7" stroke="#F08A86" stroke-width="1.100"/></svg>
<span style='left:38.00px;top:673.70px;line-height:14px;font-family:"DejaVu Sans", "Liberation Sans", sans-serif;font-size:10px;color:#000;font-weight:bold;letter-spacing:-0.067px;'>Konsolidierung</span>
<div style="left:2px;top:697px;width:291px;height:31px;background:linear-gradient(to bottom,#CBDEF9 0%,#B3CCF3 30%,#9DBBEB 55%,#8BADE5 100%)"></div>
<div style="left:2px;top:697px;width:291px;height:1px;background:#D7E5FA"></div>
<svg style="left:7px;top:701px" width="24" height="23" viewBox="0 0 24 23"><path d="M6.500 7l3.500-6.500h7l1.500 6.500z" fill="#FFFFFF" stroke="#C9CED6" stroke-width=".7"/><path d="M10 .5l2.500 4 4.500-4z" fill="#E6EAF0"/><path d="M1 9c0-2 2-3.500 5-3.500h10c3 0 6.500 4 6.500 7v5l-14 4.500-7.500-3.500z" fill="#DADDE2" stroke="#A9AEB8" stroke-width=".7"/><path d="M1 9c0-2 2-3.500 5-3.500l3 2.500c-2.500 0-4 1.500-4 4v8.500l-4-2z" fill="#B9BEC7"/><path d="M8.500 14.500l13-3 1 4.500-13.500 4.500z" fill="#FFFFFF" stroke="#B4BAC4" stroke-width=".6"/><path d="M9.500 16.500l11-3 .7 2.500-11.200 3.600z" fill="#A8D4F2"/><circle cx="13.200" cy="9.300" r="1.300" fill="#22C02A"/></svg>
<span style='left:38.00px;top:705.70px;line-height:14px;font-family:"DejaVu Sans", "Liberation Sans", sans-serif;font-size:10px;color:#000;font-weight:bold;letter-spacing:-0.099px;'>Reporting System</span>
<div style="left:2px;top:729px;width:291px;height:31px;background:linear-gradient(to bottom,#CBDEF9 0%,#B3CCF3 30%,#9DBBEB 55%,#8BADE5 100%)"></div>
<div style="left:2px;top:729px;width:291px;height:1px;background:#D7E5FA"></div>
<svg style="left:7px;top:733px" width="24" height="23" viewBox="0 0 24 23"><defs><linearGradient id="bg1" x1="0" y1="0" x2="1" y2="1"><stop offset="0" stop-color="#FFFFFF"/><stop offset=".45" stop-color="#E2E5EA"/><stop offset="1" stop-color="#A2A8B2"/></linearGradient></defs><path d="M7 6l7-2.500 3 2-5 10-7 1z" fill="#8486C4"/><path d="M7 2.500c2-2 6-1.200 6 1.200l-5.500 13c-1.200 3-7.500 2.500-7-1.500z" fill="url(#bg1)" stroke="#F6F7F9" stroke-width=".9"/><path d="M16 2.500c2-2 7-1.200 6.500 1.500l-6.500 13c-1.200 3-8 2.500-7.500-1.500z" fill="url(#bg1)" stroke="#F6F7F9" stroke-width=".9"/><circle cx="3.800" cy="16.200" r="3" fill="#3E9DE2" stroke="#E2F0FB" stroke-width=".9"/><circle cx="12.300" cy="16.500" r="3.200" fill="#3E9DE2" stroke="#E2F0FB" stroke-width=".9"/><path d="M4.800 15.200a1.500 1.500 0 1 0 0 2M13.300 15.500a1.500 1.500 0 1 0 0 2" stroke="#fff" stroke-width=".9" fill="none"/></svg>
<span style='left:38.00px;top:737.70px;line-height:14px;font-family:"DejaVu Sans", "Liberation Sans", sans-serif;font-size:10px;color:#000;font-weight:bold;letter-spacing:-0.014px;'>Budgetierung</span>
<div style="left:2px;top:761px;width:291px;height:33px;background:linear-gradient(to bottom,#CBDEF9 0%,#B3CCF3 30%,#9DBBEB 55%,#8BADE5 100%)"></div>
<div style="left:2px;top:761px;width:291px;height:1px;background:#D7E5FA"></div>
<svg style="left:276.500px;top:771.500px" width="8" height="6" viewBox="0 0 8 6"><path d="M.7 .5l2.500 2.500-2.500 2.500M4.200 .5l2.500 2.500-2.500 2.500" stroke="#000" stroke-width="1.300" fill="none"/></svg>
<i style="left:278px;top:780px;width:5px;height:3px"><b style="left:0px;top:0px;width:5px;height:1px;background:#000"></b><b style="left:1px;top:1px;width:3px;height:1px;background:#000"></b><b style="left:2px;top:2px;width:1px;height:1px;background:#000"></b></i>
<div style="left:298px;top:106px;width:1291px;height:689px;background:#0F3FA5"></div>
<div style="left:299px;top:107px;width:1289px;height:23px;background:linear-gradient(to bottom,#6690DC 0%,#4C78CC 25%,#2D5CBA 55%,#1344A8 80%,#0B3A9E 100%)"></div>
<span style='left:305.50px;top:111.00px;line-height:16px;font-family:"DejaVu Sans", "Liberation Sans", sans-serif;font-size:12px;color:#fff;font-weight:bold;letter-spacing:-0.315px;'>Offene Rechnungen</span>
<svg style="left:700px;top:106px" width="820" height="25" viewBox="700 106 820 25"><defs><linearGradient id="tg" x1="0" y1="0" x2="0" y2="1"><stop offset="0" stop-color="#CBDDF8"/><stop offset=".45" stop-color="#B4CDF3"/><stop offset="1" stop-color="#98B7EA"/></linearGradient></defs><path d="M1403 130.500L1421 112.500Q1423.5 109.500 1428.5 109.500L1502.7 109.500Q1505.7 109.500 1505.7 112.500L1505.7 130.500Z" fill="url(#tg)" stroke="#949CAC" stroke-width=".9"/><path d="M1255.6 130.500L1273.6 112.500Q1276.1 109.500 1281.1 109.500L1413.7 109.500Q1416.7 109.500 1416.7 112.500L1416.7 130.500Z" fill="url(#tg)" stroke="#949CAC" stroke-width=".9"/><path d="M1163.6 130.500L1181.6 112.500Q1184.1 109.500 1189.1 109.500L1266.3 109.500Q1269.3 109.500 1269.3 112.500L1269.3 130.500Z" fill="url(#tg)" stroke="#949CAC" stroke-width=".9"/><path d="M971.3 130.500L989.3 112.500Q991.8 109.500 996.8 109.500L1174.3 109.500Q1177.3 109.500 1177.3 112.500L1177.3 130.500Z" fill="url(#tg)" stroke="#949CAC" stroke-width=".9"/><path d="M829.7 130.500L847.7 112.500Q850.2 109.500 855.2 109.500L982 109.500Q985 109.500 985 112.500L985 130.500Z" fill="url(#tg)" stroke="#949CAC" stroke-width=".9"/><path d="M723.1 130.500L741.1 112.500Q743.6 109.500 748.6 109.500L840.4 109.500Q843.4 109.500 843.4 112.500L843.4 130.500Z" fill="url(#tg)" stroke="#949CAC" stroke-width=".9"/></svg>
<svg style="left:742px;top:111px" width="16" height="16" viewBox="0 0 23 24"><path d="M-.8 12.800L8.600 24.300 23.300 12.600 21.800 10 8.600 20 1 10z" fill="#E88F22"/><path d="M.8 10.600L10 2.300 15.200 16 8.600 21.300z" fill="#FFFFFF" stroke="#3FAEE6" stroke-width="1.700"/><path d="M10 2.300L16.400 .9 21.800 10.600 15.200 16z" fill="#F2FAFE" stroke="#3FAEE6" stroke-width="1.700"/><path d="M4 11.500l6.500-5.800M5.500 13.800l6.500-5.800M7 16l6.500-5.800" stroke="#CBE8F8" stroke-width="1"/><path d="M12.500 4.500l4.500 8.500M15 3.500l4.500 8.500" stroke="#D6EEFA" stroke-width="1"/><path d="M10 2.300L15.200 16" stroke="#2191D4" stroke-width="2"/><path d="M8.600 21.300L21.800 10.600" stroke="#6CC6EE" stroke-width="2.400"/></svg>
<span style='left:762.50px;top:111.00px;line-height:16px;font-family:"Liberation Sans", sans-serif;font-size:12px;color:#000;letter-spacing:-0.558px;'>Geldbuchungen</span>
<svg style="left:853px;top:111px" width="16" height="16" viewBox="0 0 16 16"><defs><radialGradient id="pc1" cx=".42" cy=".62" r=".62"><stop offset="0" stop-color="#FFF9A8"/><stop offset=".5" stop-color="#FFD426"/><stop offset="1" stop-color="#F59A14"/></radialGradient><linearGradient id="pa1" x1="0" y1="1" x2="1" y2="0"><stop offset="0" stop-color="#B4F000"/><stop offset=".5" stop-color="#5ED414"/><stop offset="1" stop-color="#18A828"/></linearGradient></defs><circle cx="7.500" cy="11" r="6" fill="url(#pc1)"/><path d="M5 16c3.500 1 7.500-1 8.300-4.500" stroke="#F6F6F2" stroke-width="1.500" fill="none"/><path d="M15 2L8 2.200 10.200 4.400 5.300 9.300 8 12 12.800 7.100 15 9.300Z" fill="url(#pa1)" stroke="#169A1C" stroke-width=".8"/></svg>
<span style='left:873.50px;top:111.00px;line-height:16px;font-family:"Liberation Sans", sans-serif;font-size:12px;color:#000;letter-spacing:-0.369px;'>Alle Zahlungsaufträge</span>
<svg style="left:995px;top:111px" width="16" height="16" viewBox="0 0 16 16"><defs><radialGradient id="pc2" cx=".42" cy=".62" r=".62"><stop offset="0" stop-color="#FFF9A8"/><stop offset=".5" stop-color="#FFD426"/><stop offset="1" stop-color="#F59A14"/></radialGradient><linearGradient id="pa2" x1="0" y1="1" x2="1" y2="0"><stop offset="0" stop-color="#B4F000"/><stop offset=".5" stop-color="#5ED414"/><stop offset="1" stop-color="#18A828"/></linearGradient></defs><circle cx="7.500" cy="11" r="6" fill="url(#pc2)"/><path d="M5 16c3.500 1 7.500-1 8.300-4.500" stroke="#F6F6F2" stroke-width="1.500" fill="none"/><path d="M15 2L8 2.200 10.200 4.400 5.300 9.300 8 12 12.800 7.100 15 9.300Z" fill="url(#pa2)" stroke="#169A1C" stroke-width=".8"/></svg>
<span style='left:1015.00px;top:111.00px;line-height:16px;font-family:"Liberation Sans", sans-serif;font-size:12px;color:#000;letter-spacing:-0.331px;'>Nicht verbuchte Zahlungsläufe</span>
<svg style="left:1187px;top:111px" width="16" height="16" viewBox="0 0 23 23"><path d="M10 2.500h8.500v12h-8.500z" fill="#DFF0FA" stroke="#6DB4DF" stroke-width="1.200"/><path d="M16.500 3v11" stroke="#6DB4DF" stroke-width="1.200"/><path d="M7 4.500h8.500v12h-8.500z" fill="#F2FAFE" stroke="#7FC0E6" stroke-width="1.200"/><path d="M4 7h8.500v11h-8.500z" fill="#FFFFFF" stroke="#9CCDEA" stroke-width="1.200"/><path d="M8.500 10v6.500M8.500 10h4" stroke="#7FC0E6" stroke-width="1"/><path d="M6.300 12.500h1.600v5h-1.600z" fill="#2FA838"/><path d="M17 15l4.500-3.500v6.500l-4.500 4z" fill="#EDBE2C" stroke="#E0A91A" stroke-width=".8"/><path d="M1 15h5l1 1.500h5l1-1.500h4v7h-16z" fill="#FFF8E6" stroke="#E8B820" stroke-width="1"/></svg>
<span style='left:1207.50px;top:111.00px;line-height:16px;font-family:"Liberation Sans", sans-serif;font-size:12px;color:#000;letter-spacing:-0.389px;'>Bankkonten</span>
<svg style="left:1279px;top:111px" width="16" height="16" viewBox="0 0 23 23"><path d="M10 2.500h8.500v12h-8.500z" fill="#DFF0FA" stroke="#6DB4DF" stroke-width="1.200"/><path d="M16.500 3v11" stroke="#6DB4DF" stroke-width="1.200"/><path d="M7 4.500h8.500v12h-8.500z" fill="#F2FAFE" stroke="#7FC0E6" stroke-width="1.200"/><path d="M4 7h8.500v11h-8.500z" fill="#FFFFFF" stroke="#9CCDEA" stroke-width="1.200"/><path d="M8.500 10v6.500M8.500 10h4" stroke="#7FC0E6" stroke-width="1"/><path d="M6.300 12.500h1.600v5h-1.600z" fill="#2FA838"/><path d="M17 15l4.500-3.500v6.500l-4.500 4z" fill="#EDBE2C" stroke="#E0A91A" stroke-width=".8"/><path d="M1 15h5l1 1.500h5l1-1.500h4v7h-16z" fill="#FFF8E6" stroke="#E8B820" stroke-width="1"/></svg>
<span style='left:1299.00px;top:111.00px;line-height:16px;font-family:"Liberation Sans", sans-serif;font-size:12px;color:#000;letter-spacing:-0.421px;'>Abschreibungsgruppen</span>
<svg style="left:1425px;top:111px" width="16" height="16" viewBox="0 0 23 23"><path d="M.5 6l6-2.500v16.500l-6-3.500z" fill="#3C9FD6"/><path d="M6.500 3.500l4-2v21.500l-4-3z" fill="#2E8DC6"/><path d="M6.500 1.500h6.500v3h-6.500z" fill="#8FD0F0"/><path d="M6.500 4h9v18l-5 1.500-4-3.500z" fill="#EAF6FD"/><path d="M14.500 2.500h8v15.500l-7 4z" fill="#F6FBFE"/><path d="M8 6h6.500M8 9h6.500M8 12h6.500M8 15h6.500M8 18h6" stroke="#2F93D2" stroke-width="2" stroke-dasharray="1.700 .8"/><path d="M16 4.500h6M16 7.500h6M16 10.500h6M16 13.500h6M16 16.500h5" stroke="#49A9E2" stroke-width="2" stroke-dasharray="1.600 .8"/></svg>
<span style='left:1446.00px;top:111.00px;line-height:16px;font-family:"Liberation Sans", sans-serif;font-size:12px;color:#000;letter-spacing:-0.450px;'>Mandanten</span>
<svg style="left:1531px;top:112px" width="10" height="10" viewBox="0 0 10 10"><path d="M1 1h8v2h-8zM1 4.500h8l-4 4.500z" fill="#000"/></svg>
<svg style="left:1552px;top:112px" width="9" height="13" viewBox="0 0 9 13"><path d="M2.500 1.500h4v6h-4zM5.500 1.500v6M1 7.500h7M4.500 7.500v5" stroke="#000" stroke-width="1.100" fill="none"/></svg>
<svg style="left:1571px;top:112px" width="11" height="10" viewBox="0 0 11 10"><path d="M1.500 1l8 8M9.500 1l-8 8" stroke="#000" stroke-width="2.300" fill="none"/></svg>
<div style="left:299px;top:130px;width:1289px;height:664px;background:#C3D8F8"></div>
<div style="left:301px;top:133px;width:1285px;height:434px;background:#fff;border:1px solid #7A7A7A"></div>
<div style="left:302px;top:150px;width:1266px;height:1px;background:#000"></div>
<div style="left:302px;top:151px;width:1266px;height:17px;background:#D3D3D3"></div>
<div style="left:302px;top:168px;width:1266px;height:1px;background:#000"></div>
<span style='left:613.00px;top:134.50px;line-height:15px;font-family:"Liberation Sans", sans-serif;font-size:11px;color:#000;letter-spacing:-0.143px;transform:scaleY(1.08);'>&lt;= 31.12.2..</span>
<div style="left:302px;top:186px;width:1266px;height:16px;background:#0000FF"></div>
<div style="left:302px;top:185px;width:1266px;height:1px;background:repeating-linear-gradient(to right,#C2C2C2 0 1px,transparent 1px 2px)"></div>
<div style="left:302px;top:202px;width:1266px;height:1px;background:repeating-linear-gradient(to right,#C2C2C2 0 1px,transparent 1px 2px)"></div>
<div style="left:302px;top:219px;width:1266px;height:1px;background:repeating-linear-gradient(to right,#C2C2C2 0 1px,transparent 1px 2px)"></div>
<div style="left:302px;top:236px;width:1266px;height:1px;background:repeating-linear-gradient(to right,#C2C2C2 0 1px,transparent 1px 2px)"></div>
<div style="left:302px;top:253px;width:1266px;height:1px;background:repeating-linear-gradient(to right,#C2C2C2 0 1px,transparent 1px 2px)"></div>
<div style="left:302px;top:270px;width:1266px;height:1px;background:repeating-linear-gradient(to right,#C2C2C2 0 1px,transparent 1px 2px)"></div>
<div style="left:302px;top:287px;width:1266px;height:1px;background:repeating-linear-gradient(to right,#C2C2C2 0 1px,transparent 1px 2px)"></div>
<div style="left:302px;top:304px;width:1266px;height:1px;background:repeating-linear-gradient(to right,#C2C2C2 0 1px,transparent 1px 2px)"></div>
<div style="left:302px;top:321px;width:1266px;height:1px;background:repeating-linear-gradient(to right,#C2C2C2 0 1px,transparent 1px 2px)"></div>
<div style="left:302px;top:338px;width:1266px;height:1px;background:repeating-linear-gradient(to right,#C2C2C2 0 1px,transparent 1px 2px)"></div>
<div style="left:302px;top:355px;width:1266px;height:1px;background:repeating-linear-gradient(to right,#C2C2C2 0 1px,transparent 1px 2px)"></div>
<div style="left:302px;top:372px;width:1266px;height:1px;background:repeating-linear-gradient(to right,#C2C2C2 0 1px,transparent 1px 2px)"></div>
<div style="left:302px;top:389px;width:1266px;height:1px;background:repeating-linear-gradient(to right,#C2C2C2 0 1px,transparent 1px 2px)"></div>
<div style="left:302px;top:406px;width:1266px;height:1px;background:repeating-linear-gradient(to right,#C2C2C2 0 1px,transparent 1px 2px)"></div>
<div style="left:302px;top:423px;width:1266px;height:1px;background:repeating-linear-gradient(to right,#C2C2C2 0 1px,transparent 1px 2px)"></div>
<div style="left:302px;top:440px;width:1266px;height:1px;background:repeating-linear-gradient(to right,#C2C2C2 0 1px,transparent 1px 2px)"></div>
<div style="left:302px;top:457px;width:1266px;height:1px;background:repeating-linear-gradient(to right,#C2C2C2 0 1px,transparent 1px 2px)"></div>
<div style="left:302px;top:474px;width:1266px;height:1px;background:repeating-linear-gradient(to right,#C2C2C2 0 1px,transparent 1px 2px)"></div>
<div style="left:302px;top:491px;width:1266px;height:1px;background:repeating-linear-gradient(to right,#C2C2C2 0 1px,transparent 1px 2px)"></div>
<div style="left:302px;top:508px;width:1266px;height:1px;background:repeating-linear-gradient(to right,#C2C2C2 0 1px,transparent 1px 2px)"></div>
<div style="left:302px;top:525px;width:1266px;height:1px;background:repeating-linear-gradient(to right,#C2C2C2 0 1px,transparent 1px 2px)"></div>
<div style="left:302px;top:542px;width:1266px;height:1px;background:repeating-linear-gradient(to right,#C2C2C2 0 1px,transparent 1px 2px)"></div>
<div style="left:302px;top:559px;width:1266px;height:1px;background:repeating-linear-gradient(to right,#C2C2C2 0 1px,transparent 1px 2px)"></div>
<div style="left:344px;top:134px;width:1px;height:16px;background:repeating-linear-gradient(to bottom,#BCBCBC 0 1px,transparent 1px 2px)"></div>
<div style="left:344px;top:169px;width:1px;height:397px;background:repeating-linear-gradient(to bottom,transparent 0 1px,#BCBCBC 1px 2px)"></div>
<div style="left:344px;top:186px;width:1px;height:16px;background:repeating-linear-gradient(to bottom,#E8E8FF 0 1px,#0000FF 1px 2px)"></div>
<div style="left:344px;top:154px;width:1px;height:12px;background:#8E8E8E"></div>
<div style="left:345px;top:154px;width:1px;height:12px;background:#FFFFFF"></div>
<div style="left:394px;top:134px;width:1px;height:16px;background:repeating-linear-gradient(to bottom,#BCBCBC 0 1px,transparent 1px 2px)"></div>
<div style="left:394px;top:169px;width:1px;height:397px;background:repeating-linear-gradient(to bottom,transparent 0 1px,#BCBCBC 1px 2px)"></div>
<div style="left:394px;top:186px;width:1px;height:16px;background:repeating-linear-gradient(to bottom,#E8E8FF 0 1px,#0000FF 1px 2px)"></div>
<div style="left:394px;top:154px;width:1px;height:12px;background:#8E8E8E"></div>
<div style="left:395px;top:154px;width:1px;height:12px;background:#FFFFFF"></div>
<div style="left:444px;top:134px;width:1px;height:16px;background:repeating-linear-gradient(to bottom,#BCBCBC 0 1px,transparent 1px 2px)"></div>
<div style="left:444px;top:169px;width:1px;height:397px;background:repeating-linear-gradient(to bottom,transparent 0 1px,#BCBCBC 1px 2px)"></div>
<div style="left:444px;top:186px;width:1px;height:16px;background:repeating-linear-gradient(to bottom,#E8E8FF 0 1px,#0000FF 1px 2px)"></div>
<div style="left:444px;top:154px;width:1px;height:12px;background:#8E8E8E"></div>
<div style="left:445px;top:154px;width:1px;height:12px;background:#FFFFFF"></div>
<div style="left:494px;top:134px;width:1px;height:16px;background:repeating-linear-gradient(to bottom,#BCBCBC 0 1px,transparent 1px 2px)"></div>
<div style="left:494px;top:169px;width:1px;height:397px;background:repeating-linear-gradient(to bottom,transparent 0 1px,#BCBCBC 1px 2px)"></div>
<div style="left:494px;top:186px;width:1px;height:16px;background:repeating-linear-gradient(to bottom,#E8E8FF 0 1px,#0000FF 1px 2px)"></div>
<div style="left:494px;top:154px;width:1px;height:12px;background:#8E8E8E"></div>
<div style="left:495px;top:154px;width:1px;height:12px;background:#FFFFFF"></div>
<div style="left:559px;top:134px;width:1px;height:16px;background:repeating-linear-gradient(to bottom,#BCBCBC 0 1px,transparent 1px 2px)"></div>
<div style="left:559px;top:169px;width:1px;height:397px;background:repeating-linear-gradient(to bottom,transparent 0 1px,#BCBCBC 1px 2px)"></div>
<div style="left:559px;top:186px;width:1px;height:16px;background:repeating-linear-gradient(to bottom,#E8E8FF 0 1px,#0000FF 1px 2px)"></div>
<div style="left:559px;top:154px;width:1px;height:12px;background:#8E8E8E"></div>
<div style="left:560px;top:154px;width:1px;height:12px;background:#FFFFFF"></div>
<div style="left:604px;top:134px;width:1px;height:16px;background:repeating-linear-gradient(to bottom,#BCBCBC 0 1px,transparent 1px 2px)"></div>
<div style="left:604px;top:169px;width:1px;height:397px;background:repeating-linear-gradient(to bottom,transparent 0 1px,#BCBCBC 1px 2px)"></div>
<div style="left:604px;top:186px;width:1px;height:16px;background:repeating-linear-gradient(to bottom,#E8E8FF 0 1px,#0000FF 1px 2px)"></div>
<div style="left:604px;top:154px;width:1px;height:12px;background:#8E8E8E"></div>
<div style="left:605px;top:154px;width:1px;height:12px;background:#FFFFFF"></div>
<div style="left:674px;top:134px;width:1px;height:16px;background:repeating-linear-gradient(to bottom,#BCBCBC 0 1px,transparent 1px 2px)"></div>
<div style="left:674px;top:169px;width:1px;height:397px;background:repeating-linear-gradient(to bottom,transparent 0 1px,#BCBCBC 1px 2px)"></div>
<div style="left:674px;top:186px;width:1px;height:16px;background:repeating-linear-gradient(to bottom,#E8E8FF 0 1px,#0000FF 1px 2px)"></div>
<div style="left:674px;top:154px;width:1px;height:12px;background:#8E8E8E"></div>
<div style="left:675px;top:154px;width:1px;height:12px;background:#FFFFFF"></div>
<div style="left:744px;top:134px;width:1px;height:16px;background:repeating-linear-gradient(to bottom,#BCBCBC 0 1px,transparent 1px 2px)"></div>
<div style="left:744px;top:169px;width:1px;height:397px;background:repeating-linear-gradient(to bottom,transparent 0 1px,#BCBCBC 1px 2px)"></div>
<div style="left:744px;top:186px;width:1px;height:16px;background:repeating-linear-gradient(to bottom,#E8E8FF 0 1px,#0000FF 1px 2px)"></div>
<div style="left:744px;top:154px;width:1px;height:12px;background:#8E8E8E"></div>
<div style="left:745px;top:154px;width:1px;height:12px;background:#FFFFFF"></div>
<div style="left:784px;top:134px;width:1px;height:16px;background:repeating-linear-gradient(to bottom,#BCBCBC 0 1px,transparent 1px 2px)"></div>
<div style="left:784px;top:169px;width:1px;height:397px;background:repeating-linear-gradient(to bottom,transparent 0 1px,#BCBCBC 1px 2px)"></div>
<div style="left:784px;top:186px;width:1px;height:16px;background:repeating-linear-gradient(to bottom,#E8E8FF 0 1px,#0000FF 1px 2px)"></div>
<div style="left:784px;top:154px;width:1px;height:12px;background:#8E8E8E"></div>
<div style="left:785px;top:154px;width:1px;height:12px;background:#FFFFFF"></div>
<div style="left:844px;top:134px;width:1px;height:16px;background:repeating-linear-gradient(to bottom,#BCBCBC 0 1px,transparent 1px 2px)"></div>
<div style="left:844px;top:169px;width:1px;height:397px;background:repeating-linear-gradient(to bottom,transparent 0 1px,#BCBCBC 1px 2px)"></div>
<div style="left:844px;top:186px;width:1px;height:16px;background:repeating-linear-gradient(to bottom,#E8E8FF 0 1px,#0000FF 1px 2px)"></div>
<div style="left:844px;top:154px;width:1px;height:12px;background:#8E8E8E"></div>
<div style="left:845px;top:154px;width:1px;height:12px;background:#FFFFFF"></div>
<div style="left:988px;top:134px;width:1px;height:16px;background:repeating-linear-gradient(to bottom,#BCBCBC 0 1px,transparent 1px 2px)"></div>
<div style="left:988px;top:169px;width:1px;height:397px;background:repeating-linear-gradient(to bottom,transparent 0 1px,#BCBCBC 1px 2px)"></div>
<div style="left:988px;top:186px;width:1px;height:16px;background:repeating-linear-gradient(to bottom,#E8E8FF 0 1px,#0000FF 1px 2px)"></div>
<div style="left:988px;top:154px;width:1px;height:12px;background:#8E8E8E"></div>
<div style="left:989px;top:154px;width:1px;height:12px;background:#FFFFFF"></div>
<div style="left:1068px;top:134px;width:1px;height:16px;background:repeating-linear-gradient(to bottom,#BCBCBC 0 1px,transparent 1px 2px)"></div>
<div style="left:1068px;top:169px;width:1px;height:397px;background:repeating-linear-gradient(to bottom,transparent 0 1px,#BCBCBC 1px 2px)"></div>
<div style="left:1068px;top:186px;width:1px;height:16px;background:repeating-linear-gradient(to bottom,#E8E8FF 0 1px,#0000FF 1px 2px)"></div>
<div style="left:1068px;top:154px;width:1px;height:12px;background:#8E8E8E"></div>
<div style="left:1069px;top:154px;width:1px;height:12px;background:#FFFFFF"></div>
<div style="left:1148px;top:134px;width:1px;height:16px;background:repeating-linear-gradient(to bottom,#BCBCBC 0 1px,transparent 1px 2px)"></div>
<div style="left:1148px;top:169px;width:1px;height:397px;background:repeating-linear-gradient(to bottom,transparent 0 1px,#BCBCBC 1px 2px)"></div>
<div style="left:1148px;top:186px;width:1px;height:16px;background:repeating-linear-gradient(to bottom,#E8E8FF 0 1px,#0000FF 1px 2px)"></div>
<div style="left:1148px;top:154px;width:1px;height:12px;background:#8E8E8E"></div>
<div style="left:1149px;top:154px;width:1px;height:12px;background:#FFFFFF"></div>
<div style="left:1188px;top:134px;width:1px;height:16px;background:repeating-linear-gradient(to bottom,#BCBCBC 0 1px,transparent 1px 2px)"></div>
<div style="left:1188px;top:169px;width:1px;height:397px;background:repeating-linear-gradient(to bottom,transparent 0 1px,#BCBCBC 1px 2px)"></div>
<div style="left:1188px;top:186px;width:1px;height:16px;background:repeating-linear-gradient(to bottom,#E8E8FF 0 1px,#0000FF 1px 2px)"></div>
<div style="left:1188px;top:154px;width:1px;height:12px;background:#8E8E8E"></div>
<div style="left:1189px;top:154px;width:1px;height:12px;background:#FFFFFF"></div>
<div style="left:1284px;top:134px;width:1px;height:16px;background:repeating-linear-gradient(to bottom,#BCBCBC 0 1px,transparent 1px 2px)"></div>
<div style="left:1284px;top:169px;width:1px;height:397px;background:repeating-linear-gradient(to bottom,transparent 0 1px,#BCBCBC 1px 2px)"></div>
<div style="left:1284px;top:186px;width:1px;height:16px;background:repeating-linear-gradient(to bottom,#E8E8FF 0 1px,#0000FF 1px 2px)"></div>
<div style="left:1284px;top:154px;width:1px;height:12px;background:#8E8E8E"></div>
<div style="left:1285px;top:154px;width:1px;height:12px;background:#FFFFFF"></div>
<div style="left:1334px;top:134px;width:1px;height:16px;background:repeating-linear-gradient(to bottom,#BCBCBC 0 1px,transparent 1px 2px)"></div>
<div style="left:1334px;top:169px;width:1px;height:397px;background:repeating-linear-gradient(to bottom,transparent 0 1px,#BCBCBC 1px 2px)"></div>
<div style="left:1334px;top:186px;width:1px;height:16px;background:repeating-linear-gradient(to bottom,#E8E8FF 0 1px,#0000FF 1px 2px)"></div>
<div style="left:1334px;top:154px;width:1px;height:12px;background:#8E8E8E"></div>
<div style="left:1335px;top:154px;width:1px;height:12px;background:#FFFFFF"></div>
<div style="left:1425px;top:134px;width:1px;height:16px;background:repeating-linear-gradient(to bottom,#BCBCBC 0 1px,transparent 1px 2px)"></div>
<div style="left:1425px;top:169px;width:1px;height:397px;background:repeating-linear-gradient(to bottom,transparent 0 1px,#BCBCBC 1px 2px)"></div>
<div style="left:1425px;top:186px;width:1px;height:16px;background:repeating-linear-gradient(to bottom,#E8E8FF 0 1px,#0000FF 1px 2px)"></div>
<div style="left:1425px;top:154px;width:1px;height:12px;background:#8E8E8E"></div>
<div style="left:1426px;top:154px;width:1px;height:12px;background:#FFFFFF"></div>
<div style="left:1544px;top:134px;width:1px;height:16px;background:repeating-linear-gradient(to bottom,#BCBCBC 0 1px,transparent 1px 2px)"></div>
<div style="left:1544px;top:169px;width:1px;height:397px;background:repeating-linear-gradient(to bottom,transparent 0 1px,#BCBCBC 1px 2px)"></div>
<div style="left:1544px;top:186px;width:1px;height:16px;background:repeating-linear-gradient(to bottom,#E8E8FF 0 1px,#0000FF 1px 2px)"></div>
<div style="left:1544px;top:154px;width:1px;height:12px;background:#8E8E8E"></div>
<div style="left:1545px;top:154px;width:1px;height:12px;background:#FFFFFF"></div>
<span style='left:313.50px;top:153.80px;line-height:15px;font-family:"Liberation Sans", sans-serif;font-size:11px;color:#000;letter-spacing:-0.047px;transform:scaleY(1.08);'>Link</span>
<span style='left:351.00px;top:153.80px;line-height:15px;font-family:"Liberation Sans", sans-serif;font-size:11px;color:#000;letter-spacing:-0.280px;transform:scaleY(1.08);'>In Zahl...</span>
<span style='left:403.50px;top:153.80px;line-height:15px;font-family:"Liberation Sans", sans-serif;font-size:11px;color:#000;letter-spacing:-0.633px;transform:scaleY(1.08);'>Rg....</span>
<span style='left:448.50px;top:153.80px;line-height:15px;font-family:"Liberation Sans", sans-serif;font-size:11px;color:#000;letter-spacing:-0.373px;transform:scaleY(1.08);'>Freie R...</span>
<span style='left:498.50px;top:153.80px;line-height:15px;font-family:"Liberation Sans", sans-serif;font-size:11px;color:#000;letter-spacing:-0.143px;transform:scaleY(1.08);'>Kurzname</span>
<span style='left:566.00px;top:153.80px;line-height:15px;font-family:"Liberation Sans", sans-serif;font-size:11px;color:#000;letter-spacing:-0.363px;transform:scaleY(1.08);'>Adres...</span>
<span style='left:608.50px;top:153.80px;line-height:15px;font-family:"Liberation Sans", sans-serif;font-size:11px;color:#000;letter-spacing:-0.281px;transform:scaleY(1.08);'>Datum</span>
<span style='left:678.50px;top:153.80px;line-height:15px;font-family:"Liberation Sans", sans-serif;font-size:11px;color:#000;transform:scaleY(1.08);'>Fäll. - Datum</span>
<span style='left:748.50px;top:153.80px;line-height:15px;font-family:"Liberation Sans", sans-serif;font-size:11px;color:#000;letter-spacing:-0.583px;transform:scaleY(1.08);'>Zahl...</span>
<span style='left:801.00px;top:153.80px;line-height:15px;font-family:"Liberation Sans", sans-serif;font-size:11px;color:#000;letter-spacing:-0.150px;transform:scaleY(1.08);'>Konto</span>
<span style='left:848.50px;top:153.80px;line-height:15px;font-family:"Liberation Sans", sans-serif;font-size:11px;color:#000;letter-spacing:0.328px;transform:scaleY(1.08);'>Text</span>
<span style='left:1033.50px;top:153.80px;line-height:15px;font-family:"Liberation Sans", sans-serif;font-size:11px;color:#000;letter-spacing:-0.237px;transform:scaleY(1.08);'>Betrag</span>
<span style='left:1118.50px;top:153.80px;line-height:15px;font-family:"Liberation Sans", sans-serif;font-size:11px;color:#000;letter-spacing:-0.144px;transform:scaleY(1.08);'>Offen</span>
<span style='left:1152.50px;top:153.80px;line-height:15px;font-family:"Liberation Sans", sans-serif;font-size:11px;color:#000;letter-spacing:-0.478px;transform:scaleY(1.08);'>Währ...</span>
<span style='left:1192.50px;top:153.80px;line-height:15px;font-family:"Liberation Sans", sans-serif;font-size:11px;color:#000;letter-spacing:-0.281px;transform:scaleY(1.08);'>Kurs</span>
<span style='left:1294.50px;top:153.80px;line-height:15px;font-family:"Liberation Sans", sans-serif;font-size:11px;color:#000;letter-spacing:-0.098px;transform:scaleY(1.08);'>Bel - Nr</span>
<span style='left:1338.50px;top:153.80px;line-height:15px;font-family:"Liberation Sans", sans-serif;font-size:11px;color:#000;letter-spacing:-0.220px;transform:scaleY(1.08);'>Freigegeben du...</span>
<span style='left:1454.50px;top:153.80px;line-height:15px;font-family:"Liberation Sans", sans-serif;font-size:11px;color:#000;letter-spacing:-0.071px;transform:scaleY(1.08);'>Freigegeben</span>
<svg style="left:432px;top:157px" width="7" height="6" viewBox="0 0 7 6"><path d="M5.800 .6L3.200 5.500" stroke="#fff" stroke-width="1.100" fill="none"/><path d="M0 .6h6.500M.7 .6L3.200 5.500" stroke="#222" stroke-width="1.100" fill="none"/></svg>
<span style='left:405.71px;top:170.50px;line-height:15px;font-family:"Liberation Sans", sans-serif;font-size:11px;color:#000;letter-spacing:-0.286px;transform:scaleY(1.08);'>120218</span>
<span style='left:498.50px;top:170.50px;line-height:15px;font-family:"Liberation Sans", sans-serif;font-size:11px;color:#000;letter-spacing:-0.531px;transform:scaleY(1.08);'>PF</span>
<span style='left:593.88px;top:170.50px;line-height:15px;font-family:"Liberation Sans", sans-serif;font-size:11px;color:#000;transform:scaleY(1.08);'>1</span>
<span style='left:608.50px;top:170.50px;line-height:15px;font-family:"Liberation Sans", sans-serif;font-size:11px;color:#000;letter-spacing:-0.156px;transform:scaleY(1.08);'>24.01.2020</span>
<span style='left:678.50px;top:170.50px;line-height:15px;font-family:"Liberation Sans", sans-serif;font-size:11px;color:#000;letter-spacing:-0.156px;transform:scaleY(1.08);'>23.02.2020</span>
<span style='left:748.50px;top:170.50px;line-height:15px;font-family:"Liberation Sans", sans-serif;font-size:11px;color:#000;letter-spacing:-0.656px;transform:scaleY(1.08);'>30T</span>
<span style='left:802.00px;top:170.50px;line-height:15px;font-family:"Liberation Sans", sans-serif;font-size:11px;color:#000;letter-spacing:-0.121px;transform:scaleY(1.08);'>2000</span>
<span style='left:848.50px;top:170.50px;line-height:15px;font-family:"Liberation Sans", sans-serif;font-size:11px;color:#000;letter-spacing:-0.084px;transform:scaleY(1.08);'>Rechnung, PF 120218</span>
<span style='left:1038.29px;top:170.50px;line-height:15px;font-family:"Liberation Sans", sans-serif;font-size:11px;color:#0000FF;letter-spacing:-0.206px;transform:scaleY(1.08);'>50.00</span>
<span style='left:1118.29px;top:170.50px;line-height:15px;font-family:"Liberation Sans", sans-serif;font-size:11px;color:#0000FF;letter-spacing:-0.206px;transform:scaleY(1.08);'>50.00</span>
<span style='left:1152.50px;top:170.50px;line-height:15px;font-family:"Liberation Sans", sans-serif;font-size:11px;color:#000;letter-spacing:-0.370px;transform:scaleY(1.08);'>CHF</span>
<span style='left:1324.88px;top:170.50px;line-height:15px;font-family:"Liberation Sans", sans-serif;font-size:11px;color:#000;transform:scaleY(1.08);'>9</span>
<span style='left:1338.50px;top:170.50px;line-height:15px;font-family:"Liberation Sans", sans-serif;font-size:11px;color:#000;letter-spacing:-0.300px;transform:scaleY(1.08);'>WS_01_Std</span>
<div style="left:1478px;top:170px;width:13px;height:13px;background:#fff;border:1px solid #D0D0D0"></div>
<svg style="left:1478px;top:170px" width="13" height="13" viewBox="0 0 13 13"><path d="M2.200 6.200l3 3.200 5.400-6.600" stroke="#B2B2B2" stroke-width="1.300" fill="none"/></svg>
<span style='left:405.71px;top:187.50px;line-height:15px;font-family:"Liberation Sans", sans-serif;font-size:11px;color:#fff;letter-spacing:-0.286px;transform:scaleY(1.08);'>120217</span>
<span style='left:498.50px;top:187.50px;line-height:15px;font-family:"Liberation Sans", sans-serif;font-size:11px;color:#fff;letter-spacing:-0.531px;transform:scaleY(1.08);'>PF</span>
<span style='left:593.88px;top:187.50px;line-height:15px;font-family:"Liberation Sans", sans-serif;font-size:11px;color:#fff;transform:scaleY(1.08);'>1</span>
<span style='left:608.50px;top:187.50px;line-height:15px;font-family:"Liberation Sans", sans-serif;font-size:11px;color:#fff;letter-spacing:-0.156px;transform:scaleY(1.08);'>24.01.2020</span>
<span style='left:678.50px;top:187.50px;line-height:15px;font-family:"Liberation Sans", sans-serif;font-size:11px;color:#fff;letter-spacing:-0.156px;transform:scaleY(1.08);'>23.02.2020</span>
<span style='left:748.50px;top:187.50px;line-height:15px;font-family:"Liberation Sans", sans-serif;font-size:11px;color:#fff;letter-spacing:-0.656px;transform:scaleY(1.08);'>30T</span>
<span style='left:802.00px;top:187.50px;line-height:15px;font-family:"Liberation Sans", sans-serif;font-size:11px;color:#fff;letter-spacing:-0.121px;transform:scaleY(1.08);'>2000</span>
<span style='left:848.50px;top:187.50px;line-height:15px;font-family:"Liberation Sans", sans-serif;font-size:11px;color:#fff;letter-spacing:-0.084px;transform:scaleY(1.08);'>Rechnung, PF 120217</span>
<span style='left:1023.89px;top:187.50px;line-height:15px;font-family:"Liberation Sans", sans-serif;font-size:11px;color:#fff;letter-spacing:-0.109px;transform:scaleY(1.08);'>5'670.00</span>
<span style='left:1103.89px;top:187.50px;line-height:15px;font-family:"Liberation Sans", sans-serif;font-size:11px;color:#fff;letter-spacing:-0.109px;transform:scaleY(1.08);'>5'670.00</span>
<span style='left:1152.50px;top:187.50px;line-height:15px;font-family:"Liberation Sans", sans-serif;font-size:11px;color:#fff;letter-spacing:-0.370px;transform:scaleY(1.08);'>CHF</span>
<span style='left:1324.88px;top:187.50px;line-height:15px;font-family:"Liberation Sans", sans-serif;font-size:11px;color:#fff;transform:scaleY(1.08);'>8</span>
<span style='left:1338.50px;top:187.50px;line-height:15px;font-family:"Liberation Sans", sans-serif;font-size:11px;color:#fff;letter-spacing:-0.300px;transform:scaleY(1.08);'>WS_01_Std</span>
<div style="left:1478px;top:187px;width:13px;height:13px;background:#fff;border:1px solid #E4E4E4"></div>
<svg style="left:1478px;top:187px" width="13" height="13" viewBox="0 0 13 13"><path d="M2.200 6.200l3 3.200 5.400-6.600" stroke="#B2B2B2" stroke-width="1.300" fill="none"/></svg>
<span style='left:405.71px;top:204.50px;line-height:15px;font-family:"Liberation Sans", sans-serif;font-size:11px;color:#000;letter-spacing:-0.286px;transform:scaleY(1.08);'>120216</span>
<span style='left:498.50px;top:204.50px;line-height:15px;font-family:"Liberation Sans", sans-serif;font-size:11px;color:#000;letter-spacing:-0.531px;transform:scaleY(1.08);'>PF</span>
<span style='left:593.88px;top:204.50px;line-height:15px;font-family:"Liberation Sans", sans-serif;font-size:11px;color:#000;transform:scaleY(1.08);'>1</span>
<span style='left:608.50px;top:204.50px;line-height:15px;font-family:"Liberation Sans", sans-serif;font-size:11px;color:#000;letter-spacing:-0.156px;transform:scaleY(1.08);'>24.01.2020</span>
<span style='left:678.50px;top:204.50px;line-height:15px;font-family:"Liberation Sans", sans-serif;font-size:11px;color:#000;letter-spacing:-0.156px;transform:scaleY(1.08);'>23.02.2020</span>
<span style='left:748.50px;top:204.50px;line-height:15px;font-family:"Liberation Sans", sans-serif;font-size:11px;color:#000;letter-spacing:-0.656px;transform:scaleY(1.08);'>30T</span>
<span style='left:802.00px;top:204.50px;line-height:15px;font-family:"Liberation Sans", sans-serif;font-size:11px;color:#000;letter-spacing:-0.121px;transform:scaleY(1.08);'>2000</span>
<span style='left:848.50px;top:204.50px;line-height:15px;font-family:"Liberation Sans", sans-serif;font-size:11px;color:#000;letter-spacing:-0.084px;transform:scaleY(1.08);'>Rechnung, PF 120216</span>
<span style='left:1038.29px;top:204.50px;line-height:15px;font-family:"Liberation Sans", sans-serif;font-size:11px;color:#0000FF;letter-spacing:-0.206px;transform:scaleY(1.08);'>34.00</span>
<span style='left:1118.29px;top:204.50px;line-height:15px;font-family:"Liberation Sans", sans-serif;font-size:11px;color:#0000FF;letter-spacing:-0.206px;transform:scaleY(1.08);'>34.00</span>
<span style='left:1152.50px;top:204.50px;line-height:15px;font-family:"Liberation Sans", sans-serif;font-size:11px;color:#000;letter-spacing:-0.370px;transform:scaleY(1.08);'>CHF</span>
<span style='left:1324.88px;top:204.50px;line-height:15px;font-family:"Liberation Sans", sans-serif;font-size:11px;color:#000;transform:scaleY(1.08);'>7</span>
<span style='left:1338.50px;top:204.50px;line-height:15px;font-family:"Liberation Sans", sans-serif;font-size:11px;color:#000;letter-spacing:-0.300px;transform:scaleY(1.08);'>WS_02_Std</span>
<div style="left:1478px;top:204px;width:13px;height:13px;background:#fff;border:1px solid #D0D0D0"></div>
<svg style="left:1478px;top:204px" width="13" height="13" viewBox="0 0 13 13"><path d="M2.200 6.200l3 3.200 5.400-6.600" stroke="#B2B2B2" stroke-width="1.300" fill="none"/></svg>
<span style='left:384.88px;top:221.50px;line-height:15px;font-family:"Liberation Sans", sans-serif;font-size:11px;color:#000;transform:scaleY(1.08);'>6</span>
<span style='left:405.71px;top:221.50px;line-height:15px;font-family:"Liberation Sans", sans-serif;font-size:11px;color:#000;letter-spacing:-0.286px;transform:scaleY(1.08);'>120215</span>
<span style='left:498.50px;top:221.50px;line-height:15px;font-family:"Liberation Sans", sans-serif;font-size:11px;color:#000;letter-spacing:-0.531px;transform:scaleY(1.08);'>PF</span>
<span style='left:593.88px;top:221.50px;line-height:15px;font-family:"Liberation Sans", sans-serif;font-size:11px;color:#000;transform:scaleY(1.08);'>1</span>
<span style='left:608.50px;top:221.50px;line-height:15px;font-family:"Liberation Sans", sans-serif;font-size:11px;color:#000;letter-spacing:-0.156px;transform:scaleY(1.08);'>17.01.2020</span>
<span style='left:678.50px;top:221.50px;line-height:15px;font-family:"Liberation Sans", sans-serif;font-size:11px;color:#000;letter-spacing:-0.156px;transform:scaleY(1.08);'>27.01.2020</span>
<span style='left:748.50px;top:221.50px;line-height:15px;font-family:"Liberation Sans", sans-serif;font-size:11px;color:#000;letter-spacing:-0.656px;transform:scaleY(1.08);'>10T</span>
<span style='left:802.00px;top:221.50px;line-height:15px;font-family:"Liberation Sans", sans-serif;font-size:11px;color:#000;letter-spacing:-0.121px;transform:scaleY(1.08);'>2000</span>
<span style='left:848.50px;top:221.50px;line-height:15px;font-family:"Liberation Sans", sans-serif;font-size:11px;color:#000;letter-spacing:-0.084px;transform:scaleY(1.08);'>Rechnung, PF 120215</span>
<span style='left:1038.29px;top:221.50px;line-height:15px;font-family:"Liberation Sans", sans-serif;font-size:11px;color:#0000FF;letter-spacing:-0.206px;transform:scaleY(1.08);'>50.00</span>
<span style='left:1118.29px;top:221.50px;line-height:15px;font-family:"Liberation Sans", sans-serif;font-size:11px;color:#0000FF;letter-spacing:-0.206px;transform:scaleY(1.08);'>50.00</span>
<span style='left:1152.50px;top:221.50px;line-height:15px;font-family:"Liberation Sans", sans-serif;font-size:11px;color:#000;letter-spacing:-0.370px;transform:scaleY(1.08);'>CHF</span>
<span style='left:1324.88px;top:221.50px;line-height:15px;font-family:"Liberation Sans", sans-serif;font-size:11px;color:#000;transform:scaleY(1.08);'>5</span>
<span style='left:1338.50px;top:221.50px;line-height:15px;font-family:"Liberation Sans", sans-serif;font-size:11px;color:#000;letter-spacing:-0.300px;transform:scaleY(1.08);'>WS_01_Std</span>
<div style="left:1478px;top:221px;width:13px;height:13px;background:#fff;border:1px solid #D0D0D0"></div>
<svg style="left:1478px;top:221px" width="13" height="13" viewBox="0 0 13 13"><path d="M2.200 6.200l3 3.200 5.400-6.600" stroke="#B2B2B2" stroke-width="1.300" fill="none"/></svg>
<span style='left:384.88px;top:238.50px;line-height:15px;font-family:"Liberation Sans", sans-serif;font-size:11px;color:#000;transform:scaleY(1.08);'>6</span>
<span style='left:405.71px;top:238.50px;line-height:15px;font-family:"Liberation Sans", sans-serif;font-size:11px;color:#000;letter-spacing:-0.286px;transform:scaleY(1.08);'>120214</span>
<span style='left:498.50px;top:238.50px;line-height:15px;font-family:"Liberation Sans", sans-serif;font-size:11px;color:#000;letter-spacing:-0.531px;transform:scaleY(1.08);'>PF</span>
<span style='left:593.88px;top:238.50px;line-height:15px;font-family:"Liberation Sans", sans-serif;font-size:11px;color:#000;transform:scaleY(1.08);'>1</span>
<span style='left:608.50px;top:238.50px;line-height:15px;font-family:"Liberation Sans", sans-serif;font-size:11px;color:#000;letter-spacing:-0.156px;transform:scaleY(1.08);'>17.01.2020</span>
<span style='left:678.50px;top:238.50px;line-height:15px;font-family:"Liberation Sans", sans-serif;font-size:11px;color:#000;letter-spacing:-0.156px;transform:scaleY(1.08);'>16.02.2020</span>
<span style='left:748.50px;top:238.50px;line-height:15px;font-family:"Liberation Sans", sans-serif;font-size:11px;color:#000;letter-spacing:-0.656px;transform:scaleY(1.08);'>30T</span>
<span style='left:802.00px;top:238.50px;line-height:15px;font-family:"Liberation Sans", sans-serif;font-size:11px;color:#000;letter-spacing:-0.121px;transform:scaleY(1.08);'>2000</span>
<span style='left:848.50px;top:238.50px;line-height:15px;font-family:"Liberation Sans", sans-serif;font-size:11px;color:#000;letter-spacing:-0.084px;transform:scaleY(1.08);'>Rechnung, PF 120214</span>
<span style='left:1038.29px;top:238.50px;line-height:15px;font-family:"Liberation Sans", sans-serif;font-size:11px;color:#0000FF;letter-spacing:-0.206px;transform:scaleY(1.08);'>40.00</span>
<span style='left:1118.29px;top:238.50px;line-height:15px;font-family:"Liberation Sans", sans-serif;font-size:11px;color:#0000FF;letter-spacing:-0.206px;transform:scaleY(1.08);'>40.00</span>
<span style='left:1152.50px;top:238.50px;line-height:15px;font-family:"Liberation Sans", sans-serif;font-size:11px;color:#000;letter-spacing:-0.370px;transform:scaleY(1.08);'>CHF</span>
<span style='left:1324.88px;top:238.50px;line-height:15px;font-family:"Liberation Sans", sans-serif;font-size:11px;color:#000;transform:scaleY(1.08);'>4</span>
<span style='left:1338.50px;top:238.50px;line-height:15px;font-family:"Liberation Sans", sans-serif;font-size:11px;color:#000;letter-spacing:-0.300px;transform:scaleY(1.08);'>WS_01_Std</span>
<div style="left:1478px;top:238px;width:13px;height:13px;background:#fff;border:1px solid #D0D0D0"></div>
<svg style="left:1478px;top:238px" width="13" height="13" viewBox="0 0 13 13"><path d="M2.200 6.200l3 3.200 5.400-6.600" stroke="#B2B2B2" stroke-width="1.300" fill="none"/></svg>
<div style="left:1568px;top:134px;width:17px;height:432px;background:#F0F0F0"></div>
<svg style="left:1572px;top:140px" width="9" height="6" viewBox="0 0 9 6"><path d="M.7 5.2l3.800-3.800 3.800 3.800" stroke="#B4B4B4" stroke-width="1.900" fill="none"/></svg>
<svg style="left:1572px;top:554px" width="9" height="6" viewBox="0 0 9 6"><path d="M.7 .8l3.800 3.800 3.800-3.800" stroke="#B4B4B4" stroke-width="1.900" fill="none"/></svg>
<div style="left:301px;top:567px;width:1284px;height:3px;background:#AEC9F5"></div>
<div style="left:302px;top:570px;width:1283px;height:222px;background:#696969"></div>
<div style="left:306px;top:575px;width:1275px;height:212px;background:#fff"></div>
<span style='left:320.50px;top:583.55px;line-height:15px;font-family:"DejaVu Sans", "Liberation Sans", sans-serif;font-size:11.5px;color:#000;font-weight:bold;word-spacing:2.451px;'>Buchungen der ausgewählten Rechnung: [Rg. Nr. = '120217']</span>
<div style="left:1499px;top:578px;width:73px;height:21px;background:#EDEDED;border:1px solid #ADADAD"></div>
<span style='left:1519.01px;top:582.20px;line-height:15px;font-family:"Liberation Sans", sans-serif;font-size:11px;color:#000;letter-spacing:0.029px;transform:scaleY(1.08);'>Öffnen</span>
<div style="left:314px;top:603px;width:1259px;height:1px;background:#C8C8C8"></div>
<div style="left:314px;top:607px;width:1259px;height:176px;background:#fff;border:1px solid #000"></div>
<div style="left:315px;top:608px;width:1240px;height:17px;background:#D3D3D3"></div>
<div style="left:315px;top:625px;width:1240px;height:1px;background:#000"></div>
<div style="left:315px;top:642px;width:1240px;height:1px;background:repeating-linear-gradient(to right,#C2C2C2 0 1px,transparent 1px 2px)"></div>
<div style="left:315px;top:659px;width:1240px;height:1px;background:repeating-linear-gradient(to right,#C2C2C2 0 1px,transparent 1px 2px)"></div>
<div style="left:315px;top:676px;width:1240px;height:1px;background:repeating-linear-gradient(to right,#C2C2C2 0 1px,transparent 1px 2px)"></div>
<div style="left:315px;top:693px;width:1240px;height:1px;background:repeating-linear-gradient(to right,#C2C2C2 0 1px,transparent 1px 2px)"></div>
<div style="left:315px;top:710px;width:1240px;height:1px;background:repeating-linear-gradient(to right,#C2C2C2 0 1px,transparent 1px 2px)"></div>
<div style="left:315px;top:727px;width:1240px;height:1px;background:repeating-linear-gradient(to right,#C2C2C2 0 1px,transparent 1px 2px)"></div>
<div style="left:315px;top:744px;width:1240px;height:1px;background:repeating-linear-gradient(to right,#C2C2C2 0 1px,transparent 1px 2px)"></div>
<div style="left:315px;top:761px;width:1240px;height:1px;background:repeating-linear-gradient(to right,#C2C2C2 0 1px,transparent 1px 2px)"></div>
<div style="left:315px;top:778px;width:1240px;height:1px;background:repeating-linear-gradient(to right,#C2C2C2 0 1px,transparent 1px 2px)"></div>
<div style="left:365px;top:626px;width:1px;height:156px;background:repeating-linear-gradient(to bottom,#BCBCBC 0 1px,transparent 1px 2px)"></div>
<div style="left:365px;top:610px;width:1px;height:13px;background:#8E8E8E"></div>
<div style="left:366px;top:610px;width:1px;height:13px;background:#FFFFFF"></div>
<div style="left:435px;top:626px;width:1px;height:156px;background:repeating-linear-gradient(to bottom,#BCBCBC 0 1px,transparent 1px 2px)"></div>
<div style="left:435px;top:610px;width:1px;height:13px;background:#8E8E8E"></div>
<div style="left:436px;top:610px;width:1px;height:13px;background:#FFFFFF"></div>
<div style="left:485px;top:626px;width:1px;height:156px;background:repeating-linear-gradient(to bottom,#BCBCBC 0 1px,transparent 1px 2px)"></div>
<div style="left:485px;top:610px;width:1px;height:13px;background:#8E8E8E"></div>
<div style="left:486px;top:610px;width:1px;height:13px;background:#FFFFFF"></div>
<div style="left:535px;top:626px;width:1px;height:156px;background:repeating-linear-gradient(to bottom,#BCBCBC 0 1px,transparent 1px 2px)"></div>
<div style="left:535px;top:610px;width:1px;height:13px;background:#8E8E8E"></div>
<div style="left:536px;top:610px;width:1px;height:13px;background:#FFFFFF"></div>
<div style="left:675px;top:626px;width:1px;height:156px;background:repeating-linear-gradient(to bottom,#BCBCBC 0 1px,transparent 1px 2px)"></div>
<div style="left:675px;top:610px;width:1px;height:13px;background:#8E8E8E"></div>
<div style="left:676px;top:610px;width:1px;height:13px;background:#FFFFFF"></div>
<div style="left:760px;top:626px;width:1px;height:156px;background:repeating-linear-gradient(to bottom,#BCBCBC 0 1px,transparent 1px 2px)"></div>
<div style="left:760px;top:610px;width:1px;height:13px;background:#8E8E8E"></div>
<div style="left:761px;top:610px;width:1px;height:13px;background:#FFFFFF"></div>
<div style="left:845px;top:626px;width:1px;height:156px;background:repeating-linear-gradient(to bottom,#BCBCBC 0 1px,transparent 1px 2px)"></div>
<div style="left:845px;top:610px;width:1px;height:13px;background:#8E8E8E"></div>
<div style="left:846px;top:610px;width:1px;height:13px;background:#FFFFFF"></div>
<div style="left:895px;top:626px;width:1px;height:156px;background:repeating-linear-gradient(to bottom,#BCBCBC 0 1px,transparent 1px 2px)"></div>
<div style="left:895px;top:610px;width:1px;height:13px;background:#8E8E8E"></div>
<div style="left:896px;top:610px;width:1px;height:13px;background:#FFFFFF"></div>
<div style="left:955px;top:626px;width:1px;height:156px;background:repeating-linear-gradient(to bottom,#BCBCBC 0 1px,transparent 1px 2px)"></div>
<div style="left:955px;top:610px;width:1px;height:13px;background:#8E8E8E"></div>
<div style="left:956px;top:610px;width:1px;height:13px;background:#FFFFFF"></div>
<div style="left:1035px;top:626px;width:1px;height:156px;background:repeating-linear-gradient(to bottom,#BCBCBC 0 1px,transparent 1px 2px)"></div>
<div style="left:1035px;top:610px;width:1px;height:13px;background:#8E8E8E"></div>
<div style="left:1036px;top:610px;width:1px;height:13px;background:#FFFFFF"></div>
<div style="left:1195px;top:626px;width:1px;height:156px;background:repeating-linear-gradient(to bottom,#BCBCBC 0 1px,transparent 1px 2px)"></div>
<div style="left:1195px;top:610px;width:1px;height:13px;background:#8E8E8E"></div>
<div style="left:1196px;top:610px;width:1px;height:13px;background:#FFFFFF"></div>
<div style="left:1255px;top:626px;width:1px;height:156px;background:repeating-linear-gradient(to bottom,#BCBCBC 0 1px,transparent 1px 2px)"></div>
<div style="left:1255px;top:610px;width:1px;height:13px;background:#8E8E8E"></div>
<div style="left:1256px;top:610px;width:1px;height:13px;background:#FFFFFF"></div>
<div style="left:1315px;top:626px;width:1px;height:156px;background:repeating-linear-gradient(to bottom,#BCBCBC 0 1px,transparent 1px 2px)"></div>
<div style="left:1315px;top:610px;width:1px;height:13px;background:#8E8E8E"></div>
<div style="left:1316px;top:610px;width:1px;height:13px;background:#FFFFFF"></div>
<span style='left:326.00px;top:611.90px;line-height:15px;font-family:"Liberation Sans", sans-serif;font-size:11px;color:#000;letter-spacing:-0.098px;transform:scaleY(1.08);'>Bel - Nr</span>
<span style='left:384.50px;top:611.90px;line-height:15px;font-family:"Liberation Sans", sans-serif;font-size:11px;color:#000;letter-spacing:-0.281px;transform:scaleY(1.08);'>Datum</span>
<span style='left:447.50px;top:611.90px;line-height:15px;font-family:"Liberation Sans", sans-serif;font-size:11px;color:#000;letter-spacing:-0.150px;transform:scaleY(1.08);'>Konto</span>
<span style='left:491.00px;top:611.90px;line-height:15px;font-family:"Liberation Sans", sans-serif;font-size:11px;color:#000;letter-spacing:-0.330px;transform:scaleY(1.08);'>G - Ko...</span>
<span style='left:539.50px;top:611.90px;line-height:15px;font-family:"Liberation Sans", sans-serif;font-size:11px;color:#000;letter-spacing:0.328px;transform:scaleY(1.08);'>Text</span>
<span style='left:739.00px;top:611.90px;line-height:15px;font-family:"Liberation Sans", sans-serif;font-size:11px;color:#000;letter-spacing:-0.211px;transform:scaleY(1.08);'>Soll</span>
<span style='left:810.50px;top:611.90px;line-height:15px;font-family:"Liberation Sans", sans-serif;font-size:11px;color:#000;letter-spacing:-0.284px;transform:scaleY(1.08);'>Haben</span>
<span style='left:851.00px;top:611.90px;line-height:15px;font-family:"Liberation Sans", sans-serif;font-size:11px;color:#000;letter-spacing:-0.260px;transform:scaleY(1.08);'>Währu...</span>
<span style='left:899.50px;top:611.90px;line-height:15px;font-family:"Liberation Sans", sans-serif;font-size:11px;color:#000;letter-spacing:-0.260px;transform:scaleY(1.08);'>FW - Betr...</span>
<span style='left:1009.00px;top:611.90px;line-height:15px;font-family:"Liberation Sans", sans-serif;font-size:11px;color:#000;letter-spacing:-0.156px;transform:scaleY(1.08);'>Kurs</span>
<span style='left:1159.50px;top:611.90px;line-height:15px;font-family:"Liberation Sans", sans-serif;font-size:11px;color:#000;letter-spacing:-0.237px;transform:scaleY(1.08);'>Steuer</span>
<span style='left:1198.50px;top:611.90px;line-height:15px;font-family:"Liberation Sans", sans-serif;font-size:11px;color:#000;letter-spacing:-0.337px;transform:scaleY(1.08);'>Steuerco...</span>
<span style='left:1258.50px;top:611.90px;line-height:15px;font-family:"Liberation Sans", sans-serif;font-size:11px;color:#000;letter-spacing:-0.271px;transform:scaleY(1.08);'>Kostenst...</span>
<span style='left:355.88px;top:627.80px;line-height:15px;font-family:"Liberation Sans", sans-serif;font-size:11px;color:#000;transform:scaleY(1.08);'>8</span>
<span style='left:373.50px;top:627.80px;line-height:15px;font-family:"Liberation Sans", sans-serif;font-size:11px;color:#000;letter-spacing:-0.156px;transform:scaleY(1.08);'>24.01.2020</span>
<span style='left:448.00px;top:627.80px;line-height:15px;font-family:"Liberation Sans", sans-serif;font-size:11px;color:#000;letter-spacing:-0.121px;transform:scaleY(1.08);'>2000</span>
<span style='left:498.00px;top:627.80px;line-height:15px;font-family:"Liberation Sans", sans-serif;font-size:11px;color:#000;letter-spacing:-0.121px;transform:scaleY(1.08);'>6510</span>
<span style='left:539.50px;top:627.80px;line-height:15px;font-family:"Liberation Sans", sans-serif;font-size:11px;color:#000;letter-spacing:-0.084px;transform:scaleY(1.08);'>Rechnung, PF 120217</span>
<span style='left:800.89px;top:627.80px;line-height:15px;font-family:"Liberation Sans", sans-serif;font-size:11px;color:#0000FF;letter-spacing:-0.109px;transform:scaleY(1.08);'>5'670.00</span>
<span style='left:859.00px;top:627.80px;line-height:15px;font-family:"Liberation Sans", sans-serif;font-size:11px;color:#000;letter-spacing:-0.203px;transform:scaleY(1.08);'>CHF</span>
<span style='left:448.00px;top:644.80px;line-height:15px;font-family:"Liberation Sans", sans-serif;font-size:11px;color:#000;letter-spacing:-0.121px;transform:scaleY(1.08);'>6510</span>
<span style='left:498.00px;top:644.80px;line-height:15px;font-family:"Liberation Sans", sans-serif;font-size:11px;color:#000;letter-spacing:-0.121px;transform:scaleY(1.08);'>2000</span>
<span style='left:539.50px;top:644.80px;line-height:15px;font-family:"Liberation Sans", sans-serif;font-size:11px;color:#000;letter-spacing:-0.084px;transform:scaleY(1.08);'>Rechnung, PF 120217</span>
<span style='left:715.89px;top:644.80px;line-height:15px;font-family:"Liberation Sans", sans-serif;font-size:11px;color:#0000FF;letter-spacing:-0.109px;transform:scaleY(1.08);'>5'264.62</span>
<span style='left:859.00px;top:644.80px;line-height:15px;font-family:"Liberation Sans", sans-serif;font-size:11px;color:#000;letter-spacing:-0.203px;transform:scaleY(1.08);'>CHF</span>
<span style='left:1157.89px;top:644.80px;line-height:15px;font-family:"Liberation Sans", sans-serif;font-size:11px;color:#0000FF;letter-spacing:-0.109px;transform:scaleY(1.08);'>405.38</span>
<span style='left:1198.50px;top:644.80px;line-height:15px;font-family:"Liberation Sans", sans-serif;font-size:11px;color:#000;letter-spacing:-0.410px;transform:scaleY(1.08);'>VSBn</span>
<div style="left:1555px;top:608px;width:17px;height:174px;background:#F0F0F0"></div>
<svg style="left:1559px;top:614px" width="9" height="6" viewBox="0 0 9 6"><path d="M.7 5.2l3.800-3.800 3.800 3.800" stroke="#B4B4B4" stroke-width="1.900" fill="none"/></svg>
<svg style="left:1559px;top:770px" width="9" height="6" viewBox="0 0 9 6"><path d="M.7 .8l3.800 3.800 3.800-3.800" stroke="#B4B4B4" stroke-width="1.900" fill="none"/></svg>
<div style="left:1px;top:795px;width:1588px;height:24px;background:linear-gradient(to bottom,#DCE8FB 0%,#C4D8F6 30%,#A3C0EE 65%,#88AAE3 100%);border-radius:0 0 0 5px"></div>
<div style="left:5px;top:818px;width:1585px;height:1px;background:#8A8A8A"></div>
<div style="left:5px;top:800px;width:1px;height:15px;background:#8FA9D6"></div>
<div style="left:6px;top:800px;width:1px;height:15px;background:#FFFFFF"></div>
<div style="left:144px;top:800px;width:1px;height:15px;background:#8FA9D6"></div>
<div style="left:145px;top:800px;width:1px;height:15px;background:#FFFFFF"></div>
<div style="left:288px;top:800px;width:1px;height:15px;background:#8FA9D6"></div>
<div style="left:289px;top:800px;width:1px;height:15px;background:#FFFFFF"></div>
<div style="left:360px;top:800px;width:1px;height:15px;background:#8FA9D6"></div>
<div style="left:361px;top:800px;width:1px;height:15px;background:#FFFFFF"></div>
<div style="left:479px;top:800px;width:1px;height:15px;background:#8FA9D6"></div>
<div style="left:480px;top:800px;width:1px;height:15px;background:#FFFFFF"></div>
<span style='left:21.00px;top:799.00px;line-height:16px;font-family:"Liberation Sans", sans-serif;font-size:12px;color:#000;letter-spacing:-0.648px;'>Server : LIVINGSTON</span>
<span style='left:160.00px;top:799.00px;line-height:16px;font-family:"Liberation Sans", sans-serif;font-size:12px;color:#000;letter-spacing:-0.604px;'>Benutzer : WS_01_Std</span>
<div style="left:294px;top:800px;width:60px;height:13px;background:#E6E6E6;border:1px solid #BCBCBC"></div>
<span style='left:376.00px;top:799.00px;line-height:16px;font-family:"Liberation Sans", sans-serif;font-size:12px;color:#000;letter-spacing:-0.170px;'>Anzahl Zeilen : 5</span>
<span style='left:1350.75px;top:799.00px;line-height:16px;font-family:"Liberation Sans", sans-serif;font-size:12px;color:#0000FF;letter-spacing:-0.246px;'>Network Version 9.5, Build 9.5.1.1180 (x64)</span>
<div style="left:1576px;top:805px;width:12px;height:12px"><b style="left:8px;top:0px;width:2px;height:2px;background:#7F9DD3"></b><b style="left:9px;top:1px;width:2px;height:2px;background:#fff"></b><b style="left:4px;top:4px;width:2px;height:2px;background:#7F9DD3"></b><b style="left:5px;top:5px;width:2px;height:2px;background:#fff"></b><b style="left:8px;top:4px;width:2px;height:2px;background:#7F9DD3"></b><b style="left:9px;top:5px;width:2px;height:2px;background:#fff"></b><b style="left:0px;top:8px;width:2px;height:2px;background:#7F9DD3"></b><b style="left:1px;top:9px;width:2px;height:2px;background:#fff"></b><b style="left:4px;top:8px;width:2px;height:2px;background:#7F9DD3"></b><b style="left:5px;top:9px;width:2px;height:2px;background:#fff"></b><b style="left:8px;top:8px;width:2px;height:2px;background:#7F9DD3"></b><b style="left:9px;top:9px;width:2px;height:2px;background:#fff"></b></div>
<div style="left:730px;top:199px;width:279px;height:351px;background:linear-gradient(to bottom,#DDE9FB 0%,#C4D8F6 25%,#A8C3EF 52%,#86A9E2 100%);border:1px solid #6B6B6B;box-shadow:3px 3px 4px rgba(0,0,0,.55)"></div>
<div style="left:731px;top:200px;width:24px;height:349px;background:linear-gradient(to right,#F6F6F6 0%,#F1F1F2 55%,#E6EAF1 100%)"></div>
<span style='left:766.50px;top:203.50px;line-height:16px;font-family:"Liberation Sans", sans-serif;font-size:12px;color:#000;letter-spacing:-0.133px;'>Neue Rechnung</span>
<span style='left:941.61px;top:203.50px;line-height:16px;font-family:"Liberation Sans", sans-serif;font-size:12px;color:#000;letter-spacing:0.109px;'>Ctrl+N</span>
<span style='left:766.50px;top:225.50px;line-height:16px;font-family:"Liberation Sans", sans-serif;font-size:12px;color:#000;letter-spacing:-0.190px;'>Neue Vorauszahlung</span>
<span style='left:766.50px;top:247.50px;line-height:16px;font-family:"Liberation Sans", sans-serif;font-size:12px;color:#000;letter-spacing:-0.198px;'>Rechnung bearbeiten</span>
<span style='left:941.50px;top:247.50px;line-height:16px;font-family:"Liberation Sans", sans-serif;font-size:12px;color:#000;'>Ctrl+O</span>
<span style='left:766.50px;top:269.50px;line-height:16px;font-family:"Liberation Sans", sans-serif;font-size:12px;color:#000;letter-spacing:-0.125px;'>Ausgewählte Rechnung(en) bezahlen</span>
<span style='left:766.50px;top:291.50px;line-height:16px;font-family:"Liberation Sans", sans-serif;font-size:12px;color:#000;letter-spacing:-0.089px;'>Gutschrift für diese Rechnung erstellen</span>
<span style='left:766.50px;top:313.50px;line-height:16px;font-family:"Liberation Sans", sans-serif;font-size:12px;color:#868686;letter-spacing:0.095px;'>Zahlungslauf öffnen</span>
<span style='left:766.50px;top:335.50px;line-height:16px;font-family:"Liberation Sans", sans-serif;font-size:12px;color:#868686;letter-spacing:0.014px;'>Öffnen des verknüpften Dokuments</span>
<span style='left:766.50px;top:357.50px;line-height:16px;font-family:"Liberation Sans", sans-serif;font-size:12px;color:#000;letter-spacing:-0.055px;'>Rechnung duplizieren</span>
<span style='left:941.61px;top:357.50px;line-height:16px;font-family:"Liberation Sans", sans-serif;font-size:12px;color:#000;letter-spacing:0.109px;'>Ctrl+D</span>
<span style='left:766.50px;top:379.50px;line-height:16px;font-family:"Liberation Sans", sans-serif;font-size:12px;color:#000;letter-spacing:-0.116px;'>Abgrenzen</span>
<svg style="left:992px;top:383.5px" width="5" height="9" viewBox="0 0 5 9"><path d="M.5 .5l4 4-4 4z" fill="#000"/></svg>
<span style='left:766.50px;top:401.50px;line-height:16px;font-family:"Liberation Sans", sans-serif;font-size:12px;color:#000;letter-spacing:-0.115px;'>Export</span>
<svg style="left:992px;top:405.5px" width="5" height="9" viewBox="0 0 5 9"><path d="M.5 .5l4 4-4 4z" fill="#000"/></svg>
<span style='left:766.50px;top:429.50px;line-height:16px;font-family:"Liberation Sans", sans-serif;font-size:12px;color:#000;letter-spacing:-0.061px;'>Rechnung freigeben</span>
<span style='left:766.50px;top:451.50px;line-height:16px;font-family:"Liberation Sans", sans-serif;font-size:12px;color:#000;letter-spacing:-0.095px;'>Rechnungsfreigabe aufheben</span>
<span style='left:766.50px;top:479.50px;line-height:16px;font-family:"Liberation Sans", sans-serif;font-size:12px;color:#000;letter-spacing:0.012px;'>Zelleninhalt kopieren</span>
<span style='left:766.50px;top:501.50px;line-height:16px;font-family:"Liberation Sans", sans-serif;font-size:12px;color:#000;letter-spacing:-0.088px;'>Rechnung löschen</span>
<span style='left:959.16px;top:501.50px;line-height:16px;font-family:"Liberation Sans", sans-serif;font-size:12px;color:#000;letter-spacing:-0.339px;'>Del</span>
<span style='left:766.50px;top:529.50px;line-height:16px;font-family:"Liberation Sans", sans-serif;font-size:12px;color:#000;letter-spacing:-0.233px;'>Details anzeigen</span>
<div style="left:762px;top:424px;width:246px;height:1px;background:#C6C8CC"></div>
<div style="left:762px;top:474px;width:246px;height:1px;background:#C6C8CC"></div>
<div style="left:762px;top:524px;width:246px;height:1px;background:#C6C8CC"></div>
<svg style="left:735px;top:248px" width="17" height="16" viewBox="0 0 17 16"><path d="M1.500 4.500h11.500v10h-11.500z" fill="#fff" stroke="#111" stroke-width="1"/><path d="M3.500 9.500h2M6.500 9.500h4.500M3.500 11.500h2M6.500 11.500h4.500" stroke="#111" stroke-width="1"/><path d="M3.500 8l3-3 3-3.200 5.500-.8v4l-4 1.500-3.500 3.500z" fill="#9A9A9A" stroke="#3A3A3A" stroke-width=".7" stroke-dasharray="1 1"/><path d="M15.500 1v5" stroke="#2436C8" stroke-width="1.400"/></svg>
<svg style="left:735px;top:503px" width="17" height="16" viewBox="0 0 17 16"><path d="M.8 13.500L1.500 15.300 4 14.800 15.200 1.500 14.600 .6 9 5.500 2 11Z" fill="#FF0A0A"/><path d="M2.200 1L1.500 2.200 8 8.500 15.500 15 16 14.300 9.500 7 4 1.200Z" fill="#FF0A0A"/></svg>
<div style="left:733px;top:528px;width:20px;height:20px;background:#D6E8FC;border:1px solid #4E9BE8"></div>
<svg style="left:738px;top:533px" width="10" height="10" viewBox="0 0 10 10"><path d="M2 4.300l2.600 2.700 4.600-5.600" stroke="#000" stroke-width="1.400" fill="none"/></svg>
<svg style="left:730px;top:198px" width="13" height="20" viewBox="0 0 13 20"><path d="M1 1v15.500l3.600-3.400 2.500 5.800 2.300-1-2.500-5.700h5z" fill="#fff" stroke="#000" stroke-width="1"/></svg>
</body></html>
